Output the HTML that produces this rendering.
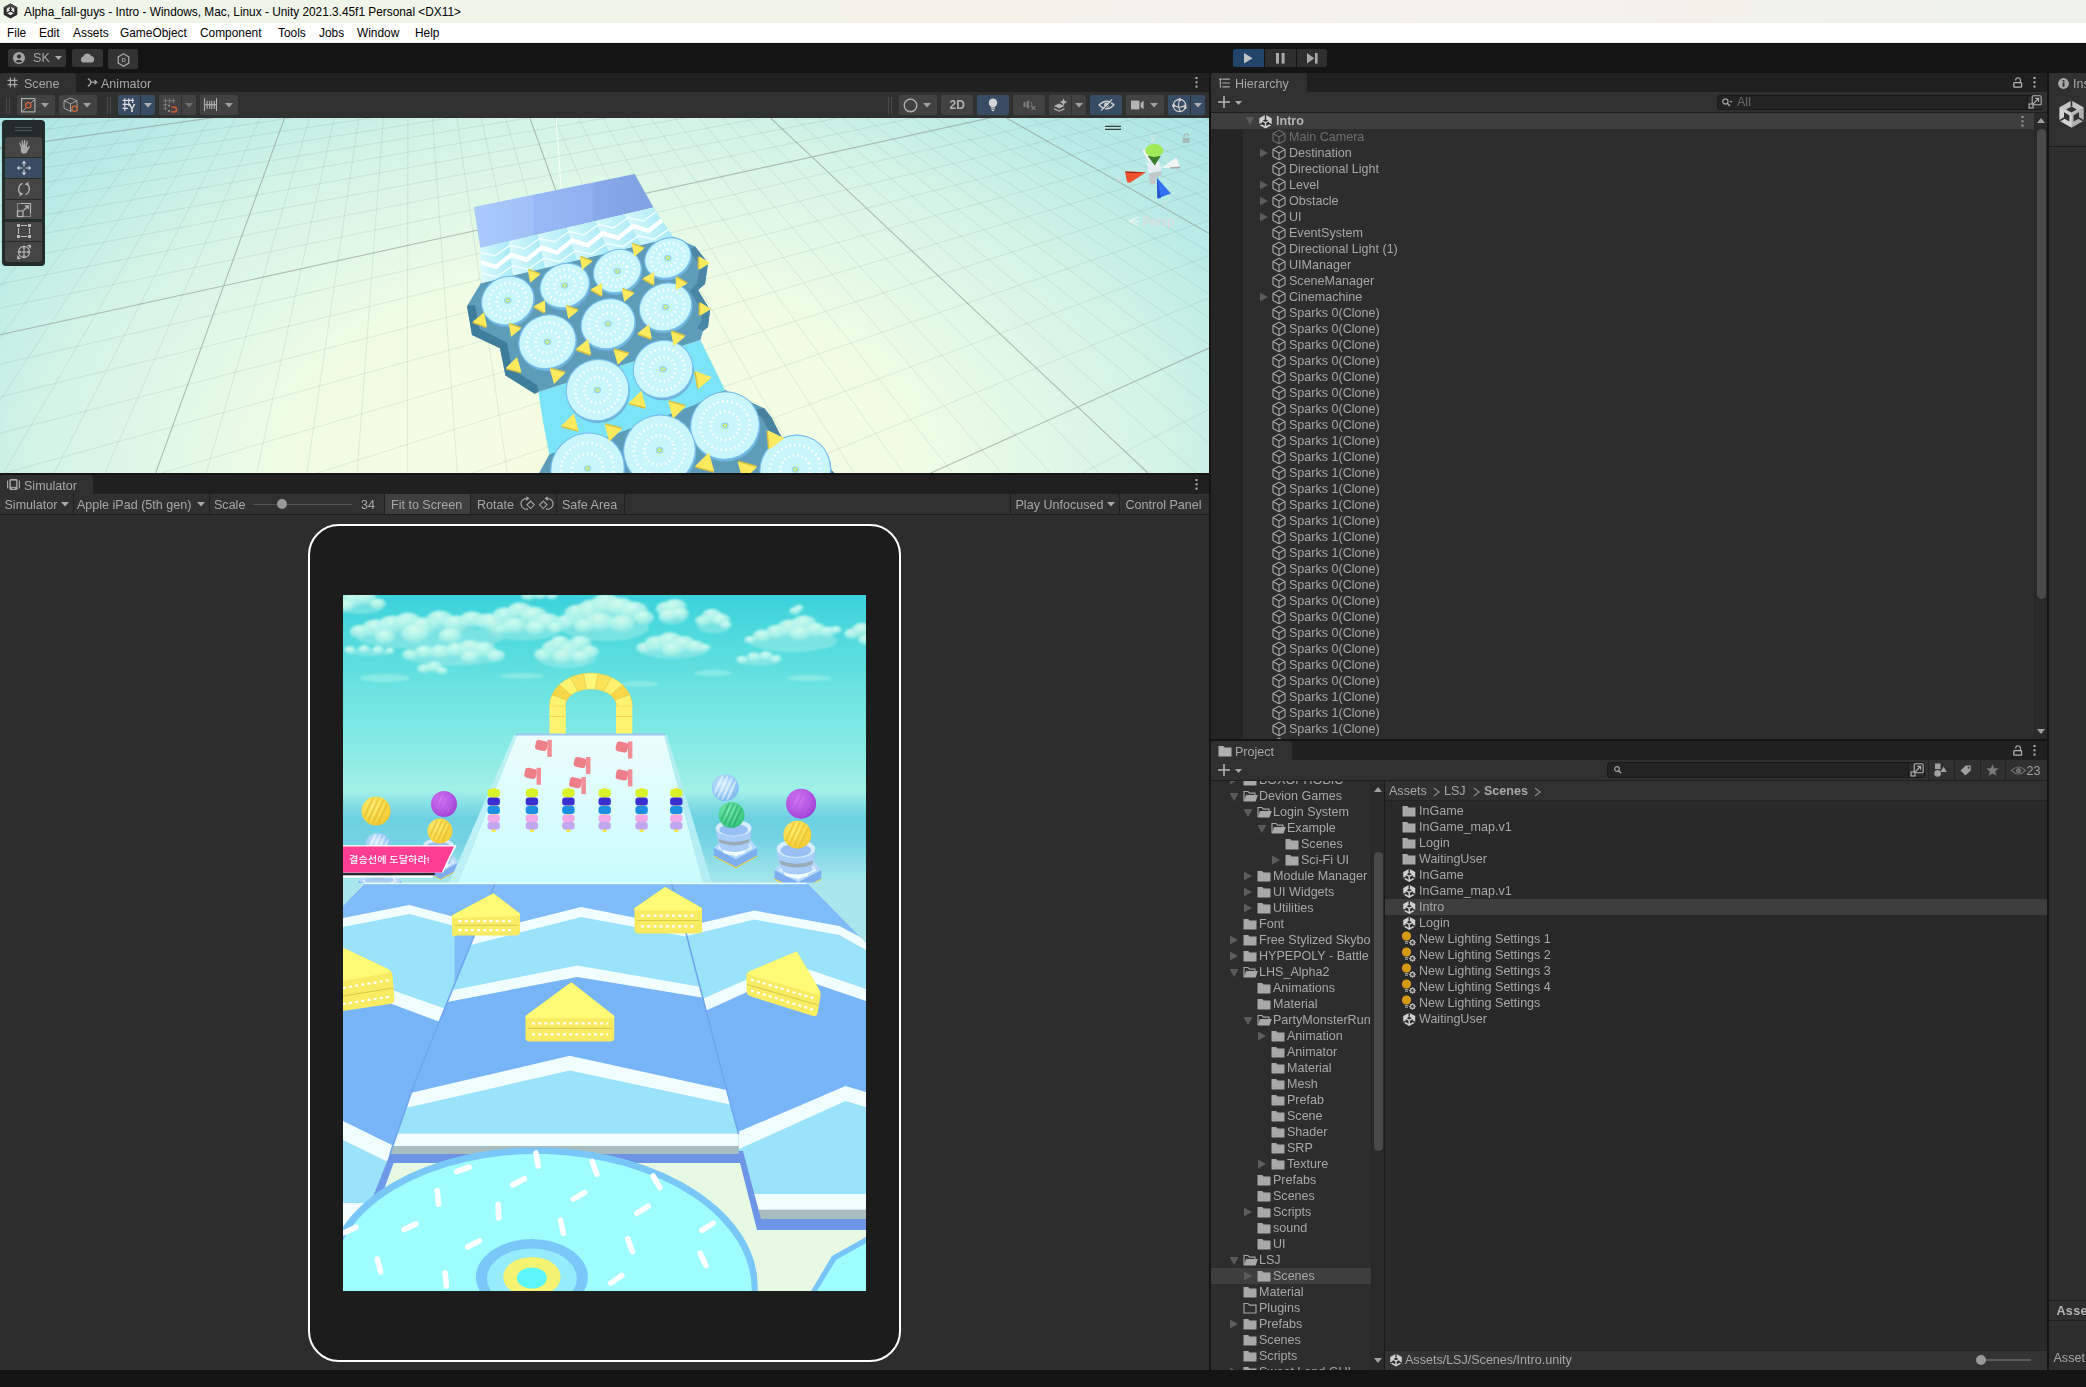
<!DOCTYPE html><html lang="en"><head><meta charset="utf-8"><title>Unity</title>
<style>
*{box-sizing:border-box;margin:0;padding:0}
html,body{width:2086px;height:1387px;overflow:hidden;background:#141414}
body{position:relative;font-family:"Liberation Sans","Noto Sans CJK KR",sans-serif;font-size:12.55px;color:#a8a8a8;line-height:16px;-webkit-font-smoothing:antialiased}
.a{position:absolute}
svg{position:absolute;overflow:visible}
.t{position:absolute;white-space:pre;height:16px;line-height:16px}
#title{left:0;top:0;width:2086px;height:23px;background:linear-gradient(90deg,#eef5e9 0%,#f1f4e9 30%,#f4f2e9 48%,#f6f1ed 62%,#f3f2ea 80%,#eef3ea 100%)}
#title .t{left:24px;top:4px;color:#000;font-size:11.85px}
#menu{left:0;top:23px;width:2086px;height:20px;background:#fff;border-bottom:1px solid #f0f0f0}
#menu .t{top:2px;color:#000;font-size:11.9px}
#tb{left:0;top:43px;width:2086px;height:30px;background:#141414;will-change:transform}
.btn{position:absolute;background:#2e2e2e;border-radius:2px}
.panel{position:absolute;background:#2d2d2d;will-change:transform}
.tabbar{position:absolute;left:0;top:0;right:0;height:19px;background:#202020}
.tab{position:absolute;top:0;height:19px;background:#303030;border-radius:3px 3px 0 0}
.tab.in{background:transparent}
.tab .t{top:2px;color:#a8a8a8}
.tbar{position:absolute;left:0;right:0;background:#303030}
.sb{position:absolute;top:3px;height:20px;background:#444;border-radius:2px}
.sb.on{background:#384d63}
.row{position:absolute;left:0;height:16px}
.dim{color:#6e6e6e}
</style>

</head><body>
<div id="title" class="a">
<svg style="left:2.5px;top:3px" width="15" height="16" viewBox="0 0 15 16" ><path d="M7.5 0.4 L14.3 4.2 V11.8 L7.5 15.6 L0.7 11.8 V4.2 Z" fill="#2a2a2a"/><path d="M7.5 0.4 L14.3 4.2 L7.5 8 L0.7 4.2 Z" fill="#4a4a4a"/><path d="M7.5 3.6 L11.3 5.7 V10 L7.5 12.2 L3.7 10 V5.7 Z" fill="#e8e8e8"/><path d="M7.5 3.6 V7.9 M11.3 10 L7.5 7.9 L3.7 10" stroke="#222" stroke-width="1.3" fill="none"/><path d="M7.5 5.4 L9.2 6.4 L7.5 7.4 L5.8 6.4 Z" fill="#222"/></svg>
<span class="t " style="left:24px;top:4px;">Alpha_fall-guys - Intro - Windows, Mac, Linux - Unity 2021.3.45f1 Personal &lt;DX11&gt;</span>
</div>
<div id="menu" class="a">
<span class="t " style="left:7px;top:2px;">File</span>
<span class="t " style="left:39px;top:2px;">Edit</span>
<span class="t " style="left:73px;top:2px;">Assets</span>
<span class="t " style="left:120px;top:2px;">GameObject</span>
<span class="t " style="left:200px;top:2px;">Component</span>
<span class="t " style="left:278px;top:2px;">Tools</span>
<span class="t " style="left:319px;top:2px;">Jobs</span>
<span class="t " style="left:357px;top:2px;">Window</span>
<span class="t " style="left:415px;top:2px;">Help</span>
</div>
<div id="tb" class="a">
<div class="btn" style="left:8px;top:6px;width:58px;height:18px;background:#333"></div>
<svg style="left:13px;top:9px" width="12" height="12" viewBox="0 0 12 12" ><circle cx="6" cy="6" r="6" fill="#a6a6a6"/><circle cx="6" cy="4.4" r="2.1" fill="#333"/><path d="M2.2 9.4 Q6 6.2 9.8 9.4 Q6 11.4 2.2 9.4 Z" fill="#333"/></svg>
<span class="t" style="left:33px;top:7px;color:#a8a8a8;font-size:12.6px">SK</span>
<svg style="left:55px;top:13px" width="7" height="4" viewBox="0 0 7 4" ><path d="M0 0 H7 L3.5 4 Z" fill="#a8a8a8"/></svg>
<div class="btn" style="left:72px;top:6px;width:31px;height:18px;background:#333"></div>
<svg style="left:79.5px;top:10px" width="15" height="10" viewBox="0 0 15 10" ><path d="M3.6 9.6 A3.1 3.1 0 0 1 3.3 3.5 A4.2 4.2 0 0 1 11.2 3.1 A3.3 3.3 0 0 1 11.6 9.6 Z" fill="#a6a6a6"/></svg>
<div class="btn" style="left:108px;top:6px;width:30px;height:19.5px;background:#333"></div>
<svg style="left:116.5px;top:9.5px" width="13" height="14" viewBox="0 0 13 14" ><path d="M6.5 0.8 L11.8 3.9 V10.1 L6.5 13.2 L1.2 10.1 V3.9 Z" fill="none" stroke="#a6a6a6" stroke-width="1.3"/><text x="4.4" y="9.3" font-family="Liberation Sans,sans-serif" font-size="6" font-weight="bold" fill="#a6a6a6">D</text></svg>
<div class="btn" style="left:1233px;top:6px;width:31px;height:18px;background:#21456a;border-radius:2px 0 0 2px"></div>
<div class="btn" style="left:1265px;top:6px;width:31px;height:18px;background:#2e2e2e;border-radius:0"></div>
<div class="btn" style="left:1297px;top:6px;width:30px;height:18px;background:#2e2e2e;border-radius:0 2px 2px 0"></div>
<svg style="left:1244px;top:9.7px" width="9" height="11" viewBox="0 0 9 11" ><path d="M0 0 L8.6 5.3 L0 10.6 Z" fill="#c2c2c2"/></svg>
<svg style="left:1275.6px;top:9.7px" width="9" height="11" viewBox="0 0 9 11" ><rect x="0" y="0" width="3" height="10.6" fill="#a8a8a8"/><rect x="5.6" y="0" width="3" height="10.6" fill="#a8a8a8"/></svg>
<svg style="left:1306.6px;top:9.7px" width="11" height="11" viewBox="0 0 11 11" ><path d="M0 0 L7.4 5.3 L0 10.6 Z" fill="#a8a8a8"/><rect x="8" y="0" width="2.6" height="10.6" fill="#a8a8a8"/></svg>
</div>
<div class="panel" style="left:0;top:73px;width:1209px;height:400px;background:#303030">
<div class="tabbar"></div>
<div class="tab" style="left:0;width:76px"></div>
<svg style="left:7px;top:4px" width="11" height="11" viewBox="0 0 11 11" ><path d="M3.4 0.5 V10.5 M7.6 0.5 V10.5 M0.5 3.4 H10.5 M0.5 7.6 H10.5" stroke="#a8a8a8" stroke-width="1.2"/></svg>
<span class="t" style="left:24px;top:2.5px;">Scene</span>
<svg style="left:86.5px;top:5px" width="11" height="9" viewBox="0 0 11 9" ><path d="M0.8 0.8 Q3 1 4 4.2 Q3.4 7.6 0.8 8.2 M4 4.2 H9.5 M7.4 2.2 L9.8 4.2 L7.4 6.2" fill="none" stroke="#a8a8a8" stroke-width="1.2"/></svg>
<span class="t" style="left:101px;top:2.5px;">Animator</span>
<svg style="left:1195px;top:4px" width="3" height="11" viewBox="0 0 3 11" ><rect x="0.5" y="0" width="2" height="2" fill="#b4b4b4"/><rect x="0.5" y="4.3" width="2" height="2" fill="#b4b4b4"/><rect x="0.5" y="8.6" width="2" height="2" fill="#b4b4b4"/></svg>
<div class="tbar" style="top:19px;height:26px"></div>
<div class="a" style="left:6px;top:23.5px;width:1px;height:17px;background:#4a4a4a"></div><div class="a" style="left:9px;top:23.5px;width:1px;height:17px;background:#4a4a4a"></div>
<div class="a" style="left:17px;top:22px;width:38px;height:20px;background:#424242;border-radius:2px"></div>
<div class="a" style="left:59px;top:22px;width:38px;height:20px;background:#424242;border-radius:2px"></div>
<div class="a" style="left:107px;top:23.5px;width:1px;height:17px;background:#4a4a4a"></div><div class="a" style="left:110px;top:23.5px;width:1px;height:17px;background:#4a4a4a"></div>
<div class="a" style="left:118px;top:22px;width:22px;height:20px;background:#384d63;border-radius:2px 0 0 2px"></div>
<div class="a" style="left:141px;top:22px;width:14px;height:20px;background:#384d63;border-radius:0 2px 2px 0"></div>
<div class="a" style="left:159px;top:22px;width:22px;height:20px;background:#424242;border-radius:2px 0 0 2px"></div>
<div class="a" style="left:182px;top:22px;width:14px;height:20px;background:#424242;border-radius:0 2px 2px 0"></div>
<div class="a" style="left:200px;top:22px;width:38px;height:20px;background:#424242;border-radius:2px"></div>
<svg style="left:21px;top:24.5px" width="15" height="15" viewBox="0 0 15 15" ><rect x="0.6" y="0.6" width="13.3" height="13.3" fill="none" stroke="#b4b4b4" stroke-width="1.1"/><path d="M2 13 L13 2" stroke="#b4b4b4" stroke-width="0.9"/><circle cx="7.3" cy="7.3" r="2.6" fill="#424242" stroke="#d3683a" stroke-width="1.3"/></svg>
<svg style="left:41px;top:30px" width="8" height="4.5" viewBox="0 0 8 4.5" ><path d="M0 0 H8 L4.0 4.5 Z" fill="#a0a0a0"/></svg>
<svg style="left:62.5px;top:24px" width="16" height="16" viewBox="0 0 16 16" ><path d="M7.5 1 L14 3.8 V11.2 L7.5 14.4 L1 11.2 V3.8 Z M1 3.8 L7.5 6.8 L14 3.8 M7.5 6.8 V14.4" fill="none" stroke="#b4b4b4" stroke-width="1" stroke-opacity=".85"/><circle cx="11.6" cy="11.8" r="2.6" fill="#424242" stroke="#d3683a" stroke-width="1.3"/></svg>
<svg style="left:83px;top:30px" width="8" height="4.5" viewBox="0 0 8 4.5" ><path d="M0 0 H8 L4.0 4.5 Z" fill="#a0a0a0"/></svg>
<svg style="left:122px;top:24px" width="15" height="15" viewBox="0 0 15 15" ><path d="M2.8 1.3 L2.8 13.9 M6.8 1.3 L6.8 9.0 M10.7 1.3 L10.7 6.0 M0.6 3.4 L11.8 3.4 M0.6 7.4 L8.0 7.4 M0.6 11.3 L6.0 11.3" stroke="#dcdcdc" stroke-width="1.15" fill="none"/><text x="6.6" y="14.6" font-family="Liberation Sans,sans-serif" font-size="10.5" font-weight="bold" fill="#e0e0e0">Y</text></svg>
<svg style="left:144px;top:30px" width="8" height="4.5" viewBox="0 0 8 4.5" ><path d="M0 0 H8 L4.0 4.5 Z" fill="#b0b0b0"/></svg>
<svg style="left:163px;top:24px" width="15" height="15" viewBox="0 0 15 15" ><path d="M2.4 1.3 L2.4 13.0 M6.4 1.3 L6.4 6.5 M10.3 1.3 L10.3 6.5 M0.3 3.8 L12.1 3.8 M0.3 7.7 L4.5 7.7 M0.3 11.7 L4.0 11.7" stroke="#7c7c7c" stroke-width="1" fill="none"/><rect x="5.2" y="7.7" width="1.8" height="1.8" fill="#9a9a9a"/><rect x="5.2" y="13" width="1.8" height="1.8" fill="#9a9a9a"/><path d="M8.4 10.1 H11.2 A2.35 2.35 0 0 1 11.2 14.8 H8.4" fill="none" stroke="#c05a30" stroke-width="1.7"/></svg>
<svg style="left:185px;top:30px" width="8" height="4.5" viewBox="0 0 8 4.5" ><path d="M0 0 H8 L4.0 4.5 Z" fill="#707070"/></svg>
<svg style="left:203px;top:24px" width="15" height="15" viewBox="0 0 15 15" ><path d="M1.6 1.3 L1.6 13.9 M13.5 1.3 L13.5 13.9 M1.6 7.7 L13.5 7.7 M4.1 3.8 L4.1 12.0 M6.7 3.8 L6.7 12.0 M8.8 3.8 L8.8 12.0 M11.3 3.8 L11.3 12.0" stroke="#b8b8b8" stroke-width="1.05" fill="none"/></svg>
<svg style="left:225px;top:30px" width="8" height="4.5" viewBox="0 0 8 4.5" ><path d="M0 0 H8 L4.0 4.5 Z" fill="#a0a0a0"/></svg>
<div class="a" style="left:888px;top:23.5px;width:1px;height:17px;background:#4a4a4a"></div><div class="a" style="left:891px;top:23.5px;width:1px;height:17px;background:#4a4a4a"></div>
<div class="a" style="left:899px;top:22px;width:38px;height:20px;background:#424242;border-radius:2px"></div>
<div class="a" style="left:941px;top:22px;width:32px;height:20px;background:#424242;border-radius:2px"></div>
<div class="a" style="left:977px;top:22px;width:32px;height:20px;background:#384d63;border-radius:2px"></div>
<div class="a" style="left:1013px;top:22px;width:32px;height:20px;background:#424242;border-radius:2px"></div>
<div class="a" style="left:1049px;top:22px;width:22px;height:20px;background:#424242;border-radius:2px 0 0 2px"></div>
<div class="a" style="left:1072px;top:22px;width:14px;height:20px;background:#424242;border-radius:0 2px 2px 0"></div>
<div class="a" style="left:1090px;top:22px;width:32px;height:20px;background:#384d63;border-radius:2px"></div>
<div class="a" style="left:1126px;top:22px;width:38px;height:20px;background:#424242;border-radius:2px"></div>
<div class="a" style="left:1168px;top:22px;width:22px;height:20px;background:#384d63;border-radius:2px 0 0 2px"></div>
<div class="a" style="left:1191px;top:22px;width:14px;height:20px;background:#384d63;border-radius:0 2px 2px 0"></div>
<svg style="left:903px;top:24.5px" width="15" height="15" viewBox="0 0 15 15" ><circle cx="7.5" cy="7.5" r="6.3" fill="none" stroke="#b4b4b4" stroke-width="1.3"/><path d="M2.6 10.6 A6.3 6.3 0 0 0 13.6 9 A6.2 5.2 0 0 1 2.6 10.6 Z" fill="#b4b4b4"/></svg>
<svg style="left:923px;top:30px" width="8" height="4.5" viewBox="0 0 8 4.5" ><path d="M0 0 H8 L4.0 4.5 Z" fill="#a0a0a0"/></svg>
<span class="t" style="left:949.5px;top:24px;font-weight:bold;font-size:12px;color:#b0b0b0">2D</span>
<svg style="left:987px;top:25px" width="12" height="14" viewBox="0 0 12 14" ><path d="M6 0.5 A4.3 4.3 0 0 1 8.2 8.4 V9.6 H3.8 V8.4 A4.3 4.3 0 0 1 6 0.5 Z" fill="#d4d4d4"/><rect x="4.1" y="10.2" width="3.8" height="1.2" fill="#d4d4d4"/><rect x="4.8" y="12" width="2.4" height="1.1" fill="#d4d4d4"/></svg>
<svg style="left:1023px;top:26px" width="14" height="12" viewBox="0 0 14 12" ><rect x="0.5" y="3" width="2" height="5" fill="#7e7e7e"/><path d="M3.5 3 L6 1 V10 L3.5 8 Z" fill="#7e7e7e"/><path d="M7.5 2.5 A4 4 0 0 1 7.5 8.5" fill="none" stroke="#7e7e7e" stroke-width="0.9"/><path d="M8.6 6.8 L12.4 10.8 M12.4 6.8 L8.6 10.8" stroke="#7e7e7e" stroke-width="1.1"/></svg>
<svg style="left:1053px;top:25px" width="15" height="14" viewBox="0 0 15 14" ><path d="M1 8 L6 5.6 L11.5 8 L6.3 10.6 Z" fill="#b4b4b4"/><path d="M1 10.6 L6.3 13.2 L11.5 10.6" fill="none" stroke="#b4b4b4" stroke-width="1.2"/><path d="M10.5 0.2 L11.6 3 L14.4 4.1 L11.6 5.2 L10.5 8 L9.4 5.2 L6.6 4.1 L9.4 3 Z" fill="#b4b4b4"/></svg>
<svg style="left:1075px;top:30px" width="8" height="4.5" viewBox="0 0 8 4.5" ><path d="M0 0 H8 L4.0 4.5 Z" fill="#a0a0a0"/></svg>
<svg style="left:1098px;top:26px" width="17" height="12" viewBox="0 0 17 12" ><path d="M1 6 Q8.5 -1.5 16 6 Q8.5 13.5 1 6 Z" fill="none" stroke="#d0d0d0" stroke-width="1.2"/><circle cx="8.5" cy="6" r="2.4" fill="#d0d0d0"/><path d="M3 11.6 L14 0.4" stroke="#d0d0d0" stroke-width="1.3"/><path d="M4 12.4 L15 1.2" stroke="#384d63" stroke-width="1"/></svg>
<svg style="left:1131px;top:27px" width="14" height="10" viewBox="0 0 14 10" ><rect x="0" y="0.6" width="8.4" height="8.8" fill="#b4b4b4"/><path d="M9.6 3 L12.6 0.8 V9.2 L9.6 7 Z" fill="#b4b4b4"/></svg>
<svg style="left:1149.5px;top:30px" width="8" height="4.5" viewBox="0 0 8 4.5" ><path d="M0 0 H8 L4.0 4.5 Z" fill="#a0a0a0"/></svg>
<svg style="left:1171.5px;top:24.5px" width="15" height="15" viewBox="0 0 15 15" ><circle cx="7.5" cy="7.5" r="6.2" fill="none" stroke="#d0d0d0" stroke-width="1.3"/><path d="M1.5 7 Q7.5 11.5 13.5 7 M7.8 1.5 Q5 7.5 8.4 13.5" fill="none" stroke="#d0d0d0" stroke-width="1.1"/><circle cx="7.8" cy="1.6" r="1.5" fill="#d0d0d0"/><circle cx="1.6" cy="7.4" r="1.5" fill="#d0d0d0"/><circle cx="13.2" cy="9.4" r="1.5" fill="#d0d0d0"/></svg>
<svg style="left:1194px;top:30px" width="8" height="4.5" viewBox="0 0 8 4.5" ><path d="M0 0 H8 L4.0 4.5 Z" fill="#b0b0b0"/></svg>
<div class="a" style="left:0;top:45px;width:1209px;height:355px;overflow:hidden"><div class="a" style="left:0;top:-1px;width:1209px;height:356px">
<div class="a" style="left:0;top:0;width:1209px;height:356px;background:radial-gradient(ellipse 900px 560px at 600px 353px,#f6fde0 0%,#f0fde4 34%,#e4f9e6 45%,#d4f4e6 62%,#bdece6 75%,#b1e8e6 86%,#abe6e6 90%,#a3e3e5 100%)"></div>
<svg style="left:0;top:0" width="1209" height="356" viewBox="0 117 1209 356">
<path d="M10.4 117.0 L0.0 125.8 M60.7 117.0 L0.0 176.3 M85.9 117.0 L0.0 207.4 M110.9 117.0 L0.0 243.6 M135.9 117.0 L0.0 286.4 M160.9 117.0 L0.0 337.7 M185.8 117.0 L0.0 400.5 M210.7 117.0 L3.4 473.0 M235.5 117.0 L54.2 473.0 M260.3 117.0 L104.9 473.0 M309.7 117.0 L206.1 473.0 M334.3 117.0 L256.6 473.0 M358.9 117.0 L306.9 473.0 M383.4 117.0 L357.1 473.0 M407.9 117.0 L407.3 473.0 M432.4 117.0 L457.3 473.0 M456.7 117.0 L507.3 473.0 M481.1 117.0 L557.1 473.0 M0.0 124.5 L56.4 117.0 M505.4 117.0 L606.9 473.0 M0.0 135.8 L137.3 117.0 M553.8 117.0 L706.1 473.0 M0.0 160.8 L297.4 117.0 M578.0 117.0 L755.6 473.0 M0.0 174.6 L376.8 117.0 M602.1 117.0 L804.9 473.0 M0.0 189.5 L455.6 117.0 M626.1 117.0 L854.2 473.0 M0.0 205.5 L534.0 117.0 M650.1 117.0 L903.4 473.0 M0.0 222.7 L611.8 117.0 M674.1 117.0 L952.5 473.0 M0.0 241.4 L689.2 117.0 M698.0 117.0 L1001.5 473.0 M0.0 261.7 L766.1 117.0 M721.9 117.0 L1050.4 473.0 M-0.0 283.9 L842.5 117.0 M745.7 117.0 L1099.1 473.0 M0.0 308.1 L918.4 117.0 M793.2 117.0 L1196.5 473.0 M0.0 364.2 L1068.9 117.0 M816.9 117.0 L1209.0 443.1 M0.0 396.9 L1143.4 117.0 M840.6 117.0 L1209.0 406.6 M0.0 433.4 L1209.0 119.2 M864.2 117.0 L1209.0 374.0 M5.1 473.0 L1209.0 139.8 M887.7 117.0 L1209.0 344.7 M161.8 473.0 L1209.0 163.0 M911.2 117.0 L1209.0 318.2 M317.4 473.0 L1209.0 189.5 M934.7 117.0 L1209.0 294.1 M472.2 473.0 L1209.0 220.1 M958.1 117.0 L1209.0 272.1 M626.0 473.0 L1209.0 255.7 M981.5 117.0 L1209.0 251.9 M778.9 473.0 L1209.0 297.8 M1028.1 117.0 L1209.0 216.2 M1081.9 473.0 L1209.0 409.5 M1051.3 117.0 L1209.0 200.3 M1074.5 117.0 L1209.0 185.6 M1097.7 117.0 L1209.0 171.9 M1120.8 117.0 L1209.0 159.1 M1143.9 117.0 L1209.0 147.1 M1166.9 117.0 L1209.0 135.9 M1189.9 117.0 L1209.0 125.3" stroke="#6c7c78" stroke-opacity="0.14" stroke-width="1" fill="none"/>
<path d="M35.6 117.0 L0.0 149.4 M285.0 117.0 L155.6 473.0 M529.6 117.0 L656.5 473.0 M0.0 147.9 L217.6 117.0 M769.5 117.0 L1147.9 473.0 M0.0 334.8 L993.9 117.0 M1004.8 117.0 L1209.0 233.3 M930.8 473.0 L1209.0 348.1" stroke="#808480" stroke-opacity="0.5" stroke-width="1.1" fill="none"/>
<path d="M556 117 L562 200" stroke="#fff" stroke-opacity="0.8" stroke-width="1"/>
<polygon points="725,390 764.2,408.3 771.5,417.4 778.8,432 787.9,448.4 831.6,470.3 836,475 538,475 549.5,454" fill="#5e9dba"/>
<polygon points="764.2,408.3 771.5,417.4 778.8,432 787.9,448.4 831.6,470.3 836,475 824,475 780,452 770,433 762,418 752,410" fill="#47839f"/>
<polygon points="538.3,392 700.4,340 725,390 693.2,405.6 596.6,441 549.2,453.9 542.9,421" fill="#7ce4f8"/>
<polygon points="481,283 673.6,237 695,246.5 708,263 705,284 698,290 710,310 708,327 703,331 700.4,340 538.3,392 534.7,393.8 505.5,375.5 500,348.2 472,335 467,306" fill="#5e9dba"/>
<polygon points="467,306 472,335 500,348.2 505.5,375.5 534.7,393.8 538.3,392 537,385 512,369 507,342.5 479.5,329 475,305" fill="#3f7d9c"/>
<polygon points="695,246.5 708,263 705,284 698,290 710,310 708,327 703,331 697,328 701,322 702,311 690,291 697,283 700,266 689,250" fill="#4a86a6"/>
<defs><linearGradient id="bl" x1="0" y1="0" x2="1" y2="0"><stop offset="0" stop-color="#aacbfb"/><stop offset="0.33" stop-color="#a0c0f8"/><stop offset="0.34" stop-color="#98b8f5"/><stop offset="0.66" stop-color="#90b0f0"/><stop offset="0.67" stop-color="#88a9ea"/><stop offset="1" stop-color="#7fa0e2"/></linearGradient></defs>
<polygon points="473.8,206.9 634.6,174 653.4,207.6 480.3,248" fill="url(#bl)"/>
<defs><linearGradient id="tg" x1="0" y1="0.6" x2="1" y2="0.4"><stop offset="0" stop-color="#dbf9fd"/><stop offset="1" stop-color="#a4eaf7"/></linearGradient></defs>
<polygon points="480.3,248.0 509.2,241.3 513.1,275.6 481.0,283.3" fill="url(#tg)"/>
<polygon points="509.2,241.3 538.0,234.5 545.2,267.9 513.1,275.6" fill="url(#tg)"/>
<polygon points="538.0,234.5 566.9,227.8 577.3,260.2 545.2,267.9" fill="url(#tg)"/>
<polygon points="566.9,227.8 595.7,221.1 609.4,252.6 577.3,260.2" fill="url(#tg)"/>
<polygon points="595.7,221.1 624.5,214.3 641.5,244.9 609.4,252.6" fill="url(#tg)"/>
<polygon points="624.5,214.3 653.4,207.6 673.6,237.2 641.5,244.9" fill="url(#tg)"/>
<clipPath id="bandc"><polygon points="480.3,248 653.4,207.6 673.6,237.2 481,283.3"/></clipPath>
<g clip-path="url(#bandc)">
<polyline points="480.7,262.2 495.9,266.9 511.2,254.9 526.5,259.7 541.7,247.7 557.0,252.5 572.3,240.5 587.6,245.3 602.8,233.2 618.1,238.0 633.4,226.0 648.6,230.8 663.9,218.8" fill="none" stroke="#fff" stroke-width="4.4"/>
<polyline points="480.5,252.4 495.2,255.7 510.0,245.4 524.8,248.8 539.6,238.5 554.4,241.8 569.1,231.5 583.9,234.9 598.7,224.6 613.5,227.9 628.3,217.7 643.1,221.0 657.8,210.7" fill="none" stroke="#f4feff" stroke-width="1.5" stroke-opacity=".95"/>
<polyline points="480.9,273.3 496.6,276.8 512.4,265.8 528.1,269.3 543.9,258.3 559.7,261.8 575.4,250.8 591.2,254.3 606.9,243.3 622.7,246.7 638.4,235.8 654.2,239.2 670.0,228.3" fill="none" stroke="#f4feff" stroke-width="1.5" stroke-opacity=".95"/>
</g>
<ellipse cx="507.7" cy="303.1" rx="26.7" ry="23.8" fill="#6fb4d8" transform="rotate(-25 507.7 300.6)"/>
<ellipse cx="507.7" cy="300.6" rx="26.7" ry="23.8" fill="#c9f5fc" stroke="#74bdee" stroke-width="1.1" transform="rotate(-25 507.7 300.6)"/>
<ellipse cx="507.7" cy="300.6" rx="19.224" ry="17.136" fill="none" stroke="#fff" stroke-opacity=".9" stroke-width="3" stroke-dasharray="1.5 3.2" transform="rotate(-25 507.7 300.6)"/>
<ellipse cx="507.7" cy="300.6" rx="11.213999999999999" ry="9.996" fill="none" stroke="#fff" stroke-opacity=".9" stroke-width="3" stroke-dasharray="1.5 3" transform="rotate(-25 507.7 300.6)"/>
<ellipse cx="507.7" cy="300.6" rx="3.6" ry="3.1" fill="#8fd4f2"/><ellipse cx="507.7" cy="300.6" rx="2.2" ry="1.9" fill="#e8ec60"/><ellipse cx="507.7" cy="300.6" rx="1" ry="0.9" fill="#7fe6f6"/>
<ellipse cx="564.7" cy="288.0" rx="25.2" ry="21.6" fill="#6fb4d8" transform="rotate(-25 564.7 285.5)"/>
<ellipse cx="564.7" cy="285.5" rx="25.2" ry="21.6" fill="#c9f5fc" stroke="#74bdee" stroke-width="1.1" transform="rotate(-25 564.7 285.5)"/>
<ellipse cx="564.7" cy="285.5" rx="18.144" ry="15.552" fill="none" stroke="#fff" stroke-opacity=".9" stroke-width="3" stroke-dasharray="1.5 3.2" transform="rotate(-25 564.7 285.5)"/>
<ellipse cx="564.7" cy="285.5" rx="10.584" ry="9.072000000000001" fill="none" stroke="#fff" stroke-opacity=".9" stroke-width="3" stroke-dasharray="1.5 3" transform="rotate(-25 564.7 285.5)"/>
<ellipse cx="564.7" cy="285.5" rx="3.6" ry="3.1" fill="#8fd4f2"/><ellipse cx="564.7" cy="285.5" rx="2.2" ry="1.9" fill="#e8ec60"/><ellipse cx="564.7" cy="285.5" rx="1" ry="0.9" fill="#7fe6f6"/>
<ellipse cx="617.3" cy="273.5" rx="24.5" ry="21" fill="#6fb4d8" transform="rotate(-25 617.3 271)"/>
<ellipse cx="617.3" cy="271" rx="24.5" ry="21" fill="#c9f5fc" stroke="#74bdee" stroke-width="1.1" transform="rotate(-25 617.3 271)"/>
<ellipse cx="617.3" cy="271" rx="17.64" ry="15.12" fill="none" stroke="#fff" stroke-opacity=".9" stroke-width="3" stroke-dasharray="1.5 3.2" transform="rotate(-25 617.3 271)"/>
<ellipse cx="617.3" cy="271" rx="10.29" ry="8.82" fill="none" stroke="#fff" stroke-opacity=".9" stroke-width="3" stroke-dasharray="1.5 3" transform="rotate(-25 617.3 271)"/>
<ellipse cx="617.3" cy="271" rx="3.6" ry="3.1" fill="#8fd4f2"/><ellipse cx="617.3" cy="271" rx="2.2" ry="1.9" fill="#e8ec60"/><ellipse cx="617.3" cy="271" rx="1" ry="0.9" fill="#7fe6f6"/>
<ellipse cx="667.8" cy="260.5" rx="23.8" ry="19.5" fill="#6fb4d8" transform="rotate(-25 667.8 258)"/>
<ellipse cx="667.8" cy="258" rx="23.8" ry="19.5" fill="#c9f5fc" stroke="#74bdee" stroke-width="1.1" transform="rotate(-25 667.8 258)"/>
<ellipse cx="667.8" cy="258" rx="17.136" ry="14.04" fill="none" stroke="#fff" stroke-opacity=".9" stroke-width="3" stroke-dasharray="1.5 3.2" transform="rotate(-25 667.8 258)"/>
<ellipse cx="667.8" cy="258" rx="9.996" ry="8.19" fill="none" stroke="#fff" stroke-opacity=".9" stroke-width="3" stroke-dasharray="1.5 3" transform="rotate(-25 667.8 258)"/>
<ellipse cx="667.8" cy="258" rx="3.6" ry="3.1" fill="#8fd4f2"/><ellipse cx="667.8" cy="258" rx="2.2" ry="1.9" fill="#e8ec60"/><ellipse cx="667.8" cy="258" rx="1" ry="0.9" fill="#7fe6f6"/>
<ellipse cx="547.4" cy="344.3" rx="29" ry="26.5" fill="#6fb4d8" transform="rotate(-25 547.4 341.8)"/>
<ellipse cx="547.4" cy="341.8" rx="29" ry="26.5" fill="#c9f5fc" stroke="#74bdee" stroke-width="1.1" transform="rotate(-25 547.4 341.8)"/>
<ellipse cx="547.4" cy="341.8" rx="20.88" ry="19.08" fill="none" stroke="#fff" stroke-opacity=".9" stroke-width="3" stroke-dasharray="1.5 3.2" transform="rotate(-25 547.4 341.8)"/>
<ellipse cx="547.4" cy="341.8" rx="12.18" ry="11.129999999999999" fill="none" stroke="#fff" stroke-opacity=".9" stroke-width="3" stroke-dasharray="1.5 3" transform="rotate(-25 547.4 341.8)"/>
<ellipse cx="547.4" cy="341.8" rx="3.6" ry="3.1" fill="#8fd4f2"/><ellipse cx="547.4" cy="341.8" rx="2.2" ry="1.9" fill="#e8ec60"/><ellipse cx="547.4" cy="341.8" rx="1" ry="0.9" fill="#7fe6f6"/>
<ellipse cx="608" cy="326.2" rx="27.4" ry="24.5" fill="#6fb4d8" transform="rotate(-25 608 323.7)"/>
<ellipse cx="608" cy="323.7" rx="27.4" ry="24.5" fill="#c9f5fc" stroke="#74bdee" stroke-width="1.1" transform="rotate(-25 608 323.7)"/>
<ellipse cx="608" cy="323.7" rx="19.727999999999998" ry="17.64" fill="none" stroke="#fff" stroke-opacity=".9" stroke-width="3" stroke-dasharray="1.5 3.2" transform="rotate(-25 608 323.7)"/>
<ellipse cx="608" cy="323.7" rx="11.508" ry="10.29" fill="none" stroke="#fff" stroke-opacity=".9" stroke-width="3" stroke-dasharray="1.5 3" transform="rotate(-25 608 323.7)"/>
<ellipse cx="608" cy="323.7" rx="3.6" ry="3.1" fill="#8fd4f2"/><ellipse cx="608" cy="323.7" rx="2.2" ry="1.9" fill="#e8ec60"/><ellipse cx="608" cy="323.7" rx="1" ry="0.9" fill="#7fe6f6"/>
<ellipse cx="665.6" cy="309.5" rx="26.7" ry="23.5" fill="#6fb4d8" transform="rotate(-25 665.6 307)"/>
<ellipse cx="665.6" cy="307" rx="26.7" ry="23.5" fill="#c9f5fc" stroke="#74bdee" stroke-width="1.1" transform="rotate(-25 665.6 307)"/>
<ellipse cx="665.6" cy="307" rx="19.224" ry="16.919999999999998" fill="none" stroke="#fff" stroke-opacity=".9" stroke-width="3" stroke-dasharray="1.5 3.2" transform="rotate(-25 665.6 307)"/>
<ellipse cx="665.6" cy="307" rx="11.213999999999999" ry="9.87" fill="none" stroke="#fff" stroke-opacity=".9" stroke-width="3" stroke-dasharray="1.5 3" transform="rotate(-25 665.6 307)"/>
<ellipse cx="665.6" cy="307" rx="3.6" ry="3.1" fill="#8fd4f2"/><ellipse cx="665.6" cy="307" rx="2.2" ry="1.9" fill="#e8ec60"/><ellipse cx="665.6" cy="307" rx="1" ry="0.9" fill="#7fe6f6"/>
<ellipse cx="663.1" cy="371.7" rx="30" ry="28.6" fill="#6fb4d8" transform="rotate(-25 663.1 369.2)"/>
<ellipse cx="663.1" cy="369.2" rx="30" ry="28.6" fill="#c9f5fc" stroke="#74bdee" stroke-width="1.1" transform="rotate(-25 663.1 369.2)"/>
<ellipse cx="663.1" cy="369.2" rx="21.599999999999998" ry="20.592" fill="none" stroke="#fff" stroke-opacity=".9" stroke-width="3" stroke-dasharray="1.5 3.2" transform="rotate(-25 663.1 369.2)"/>
<ellipse cx="663.1" cy="369.2" rx="12.6" ry="12.012" fill="none" stroke="#fff" stroke-opacity=".9" stroke-width="3" stroke-dasharray="1.5 3" transform="rotate(-25 663.1 369.2)"/>
<ellipse cx="663.1" cy="369.2" rx="3.6" ry="3.1" fill="#8fd4f2"/><ellipse cx="663.1" cy="369.2" rx="2.2" ry="1.9" fill="#e8ec60"/><ellipse cx="663.1" cy="369.2" rx="1" ry="0.9" fill="#7fe6f6"/>
<ellipse cx="597.5" cy="392.6" rx="31.5" ry="30.5" fill="#6fb4d8" transform="rotate(-25 597.5 390.1)"/>
<ellipse cx="597.5" cy="390.1" rx="31.5" ry="30.5" fill="#c9f5fc" stroke="#74bdee" stroke-width="1.1" transform="rotate(-25 597.5 390.1)"/>
<ellipse cx="597.5" cy="390.1" rx="22.68" ry="21.96" fill="none" stroke="#fff" stroke-opacity=".9" stroke-width="3" stroke-dasharray="1.5 3.2" transform="rotate(-25 597.5 390.1)"/>
<ellipse cx="597.5" cy="390.1" rx="13.229999999999999" ry="12.809999999999999" fill="none" stroke="#fff" stroke-opacity=".9" stroke-width="3" stroke-dasharray="1.5 3" transform="rotate(-25 597.5 390.1)"/>
<ellipse cx="597.5" cy="390.1" rx="3.6" ry="3.1" fill="#8fd4f2"/><ellipse cx="597.5" cy="390.1" rx="2.2" ry="1.9" fill="#e8ec60"/><ellipse cx="597.5" cy="390.1" rx="1" ry="0.9" fill="#7fe6f6"/>
<ellipse cx="725" cy="428.1" rx="34.5" ry="33.5" fill="#6fb4d8" transform="rotate(-25 725 425.6)"/>
<ellipse cx="725" cy="425.6" rx="34.5" ry="33.5" fill="#c9f5fc" stroke="#74bdee" stroke-width="1.1" transform="rotate(-25 725 425.6)"/>
<ellipse cx="725" cy="425.6" rx="24.84" ry="24.119999999999997" fill="none" stroke="#fff" stroke-opacity=".9" stroke-width="3" stroke-dasharray="1.5 3.2" transform="rotate(-25 725 425.6)"/>
<ellipse cx="725" cy="425.6" rx="14.49" ry="14.07" fill="none" stroke="#fff" stroke-opacity=".9" stroke-width="3" stroke-dasharray="1.5 3" transform="rotate(-25 725 425.6)"/>
<ellipse cx="725" cy="425.6" rx="3.6" ry="3.1" fill="#8fd4f2"/><ellipse cx="725" cy="425.6" rx="2.2" ry="1.9" fill="#e8ec60"/><ellipse cx="725" cy="425.6" rx="1" ry="0.9" fill="#7fe6f6"/>
<ellipse cx="659.5" cy="452.7" rx="36" ry="35" fill="#6fb4d8" transform="rotate(-25 659.5 450.2)"/>
<ellipse cx="659.5" cy="450.2" rx="36" ry="35" fill="#c9f5fc" stroke="#74bdee" stroke-width="1.1" transform="rotate(-25 659.5 450.2)"/>
<ellipse cx="659.5" cy="450.2" rx="25.919999999999998" ry="25.2" fill="none" stroke="#fff" stroke-opacity=".9" stroke-width="3" stroke-dasharray="1.5 3.2" transform="rotate(-25 659.5 450.2)"/>
<ellipse cx="659.5" cy="450.2" rx="15.12" ry="14.7" fill="none" stroke="#fff" stroke-opacity=".9" stroke-width="3" stroke-dasharray="1.5 3" transform="rotate(-25 659.5 450.2)"/>
<ellipse cx="659.5" cy="450.2" rx="3.6" ry="3.1" fill="#8fd4f2"/><ellipse cx="659.5" cy="450.2" rx="2.2" ry="1.9" fill="#e8ec60"/><ellipse cx="659.5" cy="450.2" rx="1" ry="0.9" fill="#7fe6f6"/>
<ellipse cx="587.5" cy="471.0" rx="37" ry="35" fill="#6fb4d8" transform="rotate(-25 587.5 468.5)"/>
<ellipse cx="587.5" cy="468.5" rx="37" ry="35" fill="#c9f5fc" stroke="#74bdee" stroke-width="1.1" transform="rotate(-25 587.5 468.5)"/>
<ellipse cx="587.5" cy="468.5" rx="26.64" ry="25.2" fill="none" stroke="#fff" stroke-opacity=".9" stroke-width="3" stroke-dasharray="1.5 3.2" transform="rotate(-25 587.5 468.5)"/>
<ellipse cx="587.5" cy="468.5" rx="15.54" ry="14.7" fill="none" stroke="#fff" stroke-opacity=".9" stroke-width="3" stroke-dasharray="1.5 3" transform="rotate(-25 587.5 468.5)"/>
<ellipse cx="587.5" cy="468.5" rx="3.6" ry="3.1" fill="#8fd4f2"/><ellipse cx="587.5" cy="468.5" rx="2.2" ry="1.9" fill="#e8ec60"/><ellipse cx="587.5" cy="468.5" rx="1" ry="0.9" fill="#7fe6f6"/>
<ellipse cx="795.2" cy="472.0" rx="35.5" ry="34" fill="#6fb4d8" transform="rotate(-25 795.2 469.5)"/>
<ellipse cx="795.2" cy="469.5" rx="35.5" ry="34" fill="#c9f5fc" stroke="#74bdee" stroke-width="1.1" transform="rotate(-25 795.2 469.5)"/>
<ellipse cx="795.2" cy="469.5" rx="25.56" ry="24.48" fill="none" stroke="#fff" stroke-opacity=".9" stroke-width="3" stroke-dasharray="1.5 3.2" transform="rotate(-25 795.2 469.5)"/>
<ellipse cx="795.2" cy="469.5" rx="14.91" ry="14.28" fill="none" stroke="#fff" stroke-opacity=".9" stroke-width="3" stroke-dasharray="1.5 3" transform="rotate(-25 795.2 469.5)"/>
<ellipse cx="795.2" cy="469.5" rx="3.6" ry="3.1" fill="#8fd4f2"/><ellipse cx="795.2" cy="469.5" rx="2.2" ry="1.9" fill="#e8ec60"/><ellipse cx="795.2" cy="469.5" rx="1" ry="0.9" fill="#7fe6f6"/>
<g transform="translate(533 275) rotate(200)"><polygon points="0,-7 6.6499999999999995,4.34 -6.6499999999999995,4.34" fill="#d8c040"/><polygon points="0,-8.2 6.6499999999999995,2.84 -6.6499999999999995,2.84" fill="#fbe95e"/></g>
<g transform="translate(585 262) rotate(200)"><polygon points="0,-7 6.6499999999999995,4.34 -6.6499999999999995,4.34" fill="#d8c040"/><polygon points="0,-8.2 6.6499999999999995,2.84 -6.6499999999999995,2.84" fill="#fbe95e"/></g>
<g transform="translate(637 249) rotate(200)"><polygon points="0,-7 6.6499999999999995,4.34 -6.6499999999999995,4.34" fill="#d8c040"/><polygon points="0,-8.2 6.6499999999999995,2.84 -6.6499999999999995,2.84" fill="#fbe95e"/></g>
<g transform="translate(702 263) rotate(90)"><polygon points="0,-7 6.6499999999999995,4.34 -6.6499999999999995,4.34" fill="#d8c040"/><polygon points="0,-8.2 6.6499999999999995,2.84 -6.6499999999999995,2.84" fill="#fbe95e"/></g>
<g transform="translate(650 279) rotate(30)"><polygon points="0,-7 6.6499999999999995,4.34 -6.6499999999999995,4.34" fill="#d8c040"/><polygon points="0,-8.2 6.6499999999999995,2.84 -6.6499999999999995,2.84" fill="#fbe95e"/></g>
<g transform="translate(680 283) rotate(210)"><polygon points="0,-7 6.6499999999999995,4.34 -6.6499999999999995,4.34" fill="#d8c040"/><polygon points="0,-8.2 6.6499999999999995,2.84 -6.6499999999999995,2.84" fill="#fbe95e"/></g>
<g transform="translate(598 290) rotate(30)"><polygon points="0,-7 6.6499999999999995,4.34 -6.6499999999999995,4.34" fill="#d8c040"/><polygon points="0,-8.2 6.6499999999999995,2.84 -6.6499999999999995,2.84" fill="#fbe95e"/></g>
<g transform="translate(627 294) rotate(200)"><polygon points="0,-7 6.6499999999999995,4.34 -6.6499999999999995,4.34" fill="#d8c040"/><polygon points="0,-8.2 6.6499999999999995,2.84 -6.6499999999999995,2.84" fill="#fbe95e"/></g>
<g transform="translate(541 307) rotate(30)"><polygon points="0,-7 6.6499999999999995,4.34 -6.6499999999999995,4.34" fill="#d8c040"/><polygon points="0,-8.2 6.6499999999999995,2.84 -6.6499999999999995,2.84" fill="#fbe95e"/></g>
<g transform="translate(571 311) rotate(200)"><polygon points="0,-7 6.6499999999999995,4.34 -6.6499999999999995,4.34" fill="#d8c040"/><polygon points="0,-8.2 6.6499999999999995,2.84 -6.6499999999999995,2.84" fill="#fbe95e"/></g>
<g transform="translate(481 321) rotate(20)"><polygon points="0,-8 7.6,4.96 -7.6,4.96" fill="#d8c040"/><polygon points="0,-9.2 7.6,3.46 -7.6,3.46" fill="#fbe95e"/></g>
<g transform="translate(514 329) rotate(200)"><polygon points="0,-7 6.6499999999999995,4.34 -6.6499999999999995,4.34" fill="#d8c040"/><polygon points="0,-8.2 6.6499999999999995,2.84 -6.6499999999999995,2.84" fill="#fbe95e"/></g>
<g transform="translate(703 309) rotate(90)"><polygon points="0,-7 6.6499999999999995,4.34 -6.6499999999999995,4.34" fill="#d8c040"/><polygon points="0,-8.2 6.6499999999999995,2.84 -6.6499999999999995,2.84" fill="#fbe95e"/></g>
<g transform="translate(514.6 366.4) rotate(15)"><polygon points="0,-8.5 8.075,5.27 -8.075,5.27" fill="#d8c040"/><polygon points="0,-9.7 8.075,3.7699999999999996 -8.075,3.7699999999999996" fill="#fbe95e"/></g>
<g transform="translate(556.5 374.6) rotate(195)"><polygon points="0,-8.5 8.075,5.27 -8.075,5.27" fill="#d8c040"/><polygon points="0,-9.7 8.075,3.7699999999999996 -8.075,3.7699999999999996" fill="#fbe95e"/></g>
<g transform="translate(584.8 348.2) rotate(20)"><polygon points="0,-8.5 8.075,5.27 -8.075,5.27" fill="#d8c040"/><polygon points="0,-9.7 8.075,3.7699999999999996 -8.075,3.7699999999999996" fill="#fbe95e"/></g>
<g transform="translate(620.3 355.5) rotate(195)"><polygon points="0,-8.5 8.075,5.27 -8.075,5.27" fill="#d8c040"/><polygon points="0,-9.7 8.075,3.7699999999999996 -8.075,3.7699999999999996" fill="#fbe95e"/></g>
<g transform="translate(645.8 332.7) rotate(20)"><polygon points="0,-8 7.6,4.96 -7.6,4.96" fill="#d8c040"/><polygon points="0,-9.2 7.6,3.46 -7.6,3.46" fill="#fbe95e"/></g>
<g transform="translate(676.8 337.3) rotate(200)"><polygon points="0,-8 7.6,4.96 -7.6,4.96" fill="#d8c040"/><polygon points="0,-9.2 7.6,3.46 -7.6,3.46" fill="#fbe95e"/></g>
<g transform="translate(638.5 401) rotate(15)"><polygon points="0,-9.5 9.025,5.89 -9.025,5.89" fill="#d8c040"/><polygon points="0,-10.7 9.025,4.39 -9.025,4.39" fill="#fbe95e"/></g>
<g transform="translate(701.4 379.2) rotate(80)"><polygon points="0,-9.5 9.025,5.89 -9.025,5.89" fill="#d8c040"/><polygon points="0,-10.7 9.025,4.39 -9.025,4.39" fill="#fbe95e"/></g>
<g transform="translate(675.8 408.3) rotate(195)"><polygon points="0,-9.5 9.025,5.89 -9.025,5.89" fill="#d8c040"/><polygon points="0,-10.7 9.025,4.39 -9.025,4.39" fill="#fbe95e"/></g>
<g transform="translate(571.1 423.8) rotate(15)"><polygon points="0,-9.5 9.025,5.89 -9.025,5.89" fill="#d8c040"/><polygon points="0,-10.7 9.025,4.39 -9.025,4.39" fill="#fbe95e"/></g>
<g transform="translate(612.1 431.1) rotate(195)"><polygon points="0,-9.5 9.025,5.89 -9.025,5.89" fill="#d8c040"/><polygon points="0,-10.7 9.025,4.39 -9.025,4.39" fill="#fbe95e"/></g>
<g transform="translate(773.3 439.3) rotate(85)"><polygon points="0,-10 9.5,6.2 -9.5,6.2" fill="#d8c040"/><polygon points="0,-11.2 9.5,4.7 -9.5,4.7" fill="#fbe95e"/></g>
<g transform="translate(705.9 463.9) rotate(15)"><polygon points="0,-10.5 9.975,6.51 -9.975,6.51" fill="#d8c040"/><polygon points="0,-11.7 9.975,5.01 -9.975,5.01" fill="#fbe95e"/></g>
<g transform="translate(746 469.4) rotate(195)"><polygon points="0,-10.5 9.975,6.51 -9.975,6.51" fill="#d8c040"/><polygon points="0,-11.7 9.975,5.01 -9.975,5.01" fill="#fbe95e"/></g>
<g>
<polygon points="1142.2,150.5 1145.2,149.6 1152.1,161.3 1148.7,162.2" fill="#f2f2f2"/>
<polygon points="1149.1,173.4 1161.6,171.6 1161.6,175.1 1155.6,177.7 1155.6,183.8 1150.4,184.2 1149.1,178.6" fill="#c4c8ca"/>
<polygon points="1146.9,163 1159,161.3 1162,169.9 1148.7,173.4" fill="#e7ebf2"/>
<polygon points="1147.8,156 1160.8,156 1154.7,165.4" fill="#3c7c2c"/>
<ellipse cx="1154.3" cy="150.5" rx="9.1" ry="6.5" fill="#9eea58"/>
<polygon points="1125.1,171.5 1146,172.3 1129.6,183.1 1127,182" fill="#f0512f"/><polygon points="1125.1,171.5 1134,171.8 1146,172.3 1133,173.2 1125.4,172.6" fill="#a82a1a"/>
<polygon points="1156.9,177.7 1171,193.5 1157.5,198.5" fill="#3272f2"/><polygon points="1156.9,177.7 1161,198 1157.5,198.5" fill="#2452c8"/>
<polygon points="1161.6,167.8 1176.4,157.4 1180.2,168.2" fill="#f3f4f5"/><polygon points="1170,167.2 1180.2,166.6 1180.2,168.4 1170,168.4" fill="#a4a8aa"/>
<text x="1150.5" y="140.5" font-family="Liberation Sans,sans-serif" font-size="10" fill="#e2e6e6">y</text>
<text x="1116" y="182" font-family="Liberation Sans,sans-serif" font-size="9.5" fill="#d8dede">x</text>
<text x="1162.5" y="206.3" font-family="Liberation Sans,sans-serif" font-size="9.5" fill="#d8dede">z</text>
<text x="1142.6" y="225.5" font-family="Liberation Sans,sans-serif" font-size="12" fill="#ead4dc" fill-opacity=".9" textLength="31.2" lengthAdjust="spacingAndGlyphs">Persp</text>
<path d="M1138.5 217 L1129.5 221.2 L1138.5 225.4 M1129.5 221.2 H1139" stroke="#f2f8f4" stroke-opacity=".9" fill="none" stroke-width="1.1"/>
<path d="M1105 126.4 H1121 M1105 129.4 H1121" stroke="#3c3c3c" stroke-width="1.1"/>
<rect x="1182.6" y="138" width="7" height="5" fill="#a9b9b9"/><path d="M1184 138 V136.4 A2.3 2.3 0 0 1 1188.6 136" fill="none" stroke="#a9b9b9" stroke-width="1.1"/>
</g>
</svg>
<div class="a" style="left:2px;top:3px;width:43px;height:145.5px;background:#232b2b;border-radius:4px"></div>
<div class="a" style="left:15px;top:10px;width:17px;height:1px;background:#4c5555"></div><div class="a" style="left:15px;top:13px;width:17px;height:1px;background:#4c5555"></div>
<div class="a" style="left:5.2px;top:20.3px;width:36.9px;height:19.4px;background:#454545;border-radius:3px 3px 0 0"></div>
<div class="a" style="left:5.2px;top:41.4px;width:36.9px;height:19.4px;background:#384d63;border-radius:0"></div>
<div class="a" style="left:5.2px;top:62.3px;width:36.9px;height:19.4px;background:#454545;border-radius:0"></div>
<div class="a" style="left:5.2px;top:83.0px;width:36.9px;height:19.4px;background:#454545;border-radius:0"></div>
<div class="a" style="left:5.2px;top:104.5px;width:36.9px;height:19.4px;background:#454545;border-radius:0"></div>
<div class="a" style="left:5.2px;top:125.3px;width:36.9px;height:19.4px;background:#454545;border-radius:0 0 3px 3px"></div>
<svg style="left:15.5px;top:22.1px" width="16" height="16" viewBox="0 0 16 16"><path d="M4.9 8.6 L3.2 4.2 Q3.4 3.2 4.3 3.6 L5.9 7.2 L5.6 1.9 Q6.2 0.9 6.9 1.8 L7.5 6.8 L8.1 1.2 Q8.8 0.3 9.4 1.3 L9.3 6.9 L10.7 2.4 Q11.5 1.7 11.9 2.7 L10.9 8 L11.2 9.1 L13 7 Q14.1 6.6 14 7.8 L11.6 12.2 Q10.8 14.6 8.4 14.6 H7.4 Q5.6 14.6 4.9 12.4 Z" fill="#a9a9a9"/></svg>
<svg style="left:15.5px;top:43.2px" width="16" height="16" viewBox="0 0 16 16"><path d="M8 2 V14 M2 8 H14" stroke="#c8ccd0" stroke-width="1.1"/><path d="M8 0.6 L10.3 3.4 H5.7 Z M8 15.4 L10.3 12.6 H5.7 Z M0.6 8 L3.4 5.7 V10.3 Z M15.4 8 L12.6 5.7 V10.3 Z" fill="#c8ccd0"/><rect x="6.6" y="6.6" width="2.8" height="2.8" fill="#384d63"/></svg>
<svg style="left:15.5px;top:64.1px" width="16" height="16" viewBox="0 0 16 16"><path d="M11.5 3.2 A5.8 6.2 0 0 1 9.5 13.6 M4.5 12.8 A5.8 6.2 0 0 1 6.5 2.4" fill="none" stroke="#b8b8b8" stroke-width="1.2"/><path d="M12.6 0.8 L11.9 4.4 L8.6 3.2 Z M3.4 15.2 L4.1 11.6 L7.4 12.8 Z" fill="#b8b8b8"/></svg>
<svg style="left:15.5px;top:84.8px" width="16" height="16" viewBox="0 0 16 16"><path d="M5 1.5 H14.5 V11" fill="none" stroke="#b8b8b8" stroke-width="1.2"/><path d="M14.5 11 V14.5 H1.5 V1.5 H5" fill="none" stroke="#b8b8b8" stroke-width="1.2" stroke-opacity=".55"/><rect x="1.5" y="9" width="5.5" height="5.5" fill="none" stroke="#b8b8b8" stroke-width="1.2"/><path d="M7.5 8.5 L12 4 M8.8 3.8 H12.2 V7.2" fill="none" stroke="#b8b8b8" stroke-width="1.2"/></svg>
<svg style="left:15.5px;top:106.3px" width="16" height="16" viewBox="0 0 16 16"><path d="M3 2.5 H13 M13.5 3 V13 M13 13.5 H3 M2.5 13 V3" stroke="#b8b8b8" stroke-width="1.1" stroke-dasharray="6.2 3.8" stroke-dashoffset="-1.9" fill="none"/><rect x="1" y="1" width="3" height="3" fill="#b8b8b8"/><rect x="12" y="1" width="3" height="3" fill="#b8b8b8"/><rect x="1" y="12" width="3" height="3" fill="#b8b8b8"/><rect x="12" y="12" width="3" height="3" fill="#b8b8b8"/></svg>
<svg style="left:15.5px;top:127.1px" width="16" height="16" viewBox="0 0 16 16"><circle cx="8" cy="8" r="5.6" fill="none" stroke="#b8b8b8" stroke-width="1.1"/><path d="M8 3.5 V12.5 M3.5 8 H12.5" stroke="#b8b8b8" stroke-width="1.1"/><path d="M8 2.2 L9.6 4.4 H6.4 Z M8 13.8 L9.6 11.6 H6.4 Z M2.2 8 L4.4 6.4 V9.6 Z M13.8 8 L11.6 6.4 V9.6 Z" fill="#b8b8b8"/><path d="M11 1 L15 0.8 L14.8 5 Z M5 15 L1 15.2 L1.2 11 Z" fill="#b8b8b8"/></svg>
</div></div>
</div>
<div class="panel" style="left:0;top:475px;width:1209px;height:895px">
<div class="tabbar"></div>
<div class="tab" style="left:0;width:93px"></div>
<svg style="left:6.5px;top:4px" width="13" height="11" viewBox="0 0 13 11" ><rect x="0" y="1.6" width="1.2" height="7.8" fill="#a8a8a8"/><rect x="11.8" y="1.6" width="1.2" height="7.8" fill="#a8a8a8"/><rect x="2.4" y="0" width="8.2" height="11" rx="1.2" fill="#a8a8a8"/><rect x="3.8" y="1.6" width="5.4" height="6.2" fill="#303030"/><rect x="5.2" y="8.8" width="2.6" height="1" fill="#303030"/></svg>
<span class="t" style="left:24px;top:2.5px;">Simulator</span>
<svg style="left:1195px;top:4px" width="3" height="11" viewBox="0 0 3 11" ><rect x="0.5" y="0" width="2" height="2" fill="#b4b4b4"/><rect x="0.5" y="4.3" width="2" height="2" fill="#b4b4b4"/><rect x="0.5" y="8.6" width="2" height="2" fill="#b4b4b4"/></svg>
<div class="tbar" style="top:19px;height:21px;border-bottom:1px solid #1d1d1d"></div>
<span class="t" style="left:4.5px;top:21.7px;">Simulator</span>
<svg style="left:60.5px;top:27.3px" width="8" height="4.5" viewBox="0 0 8 4.5" ><path d="M0 0 H8 L4.0 4.5 Z" fill="#a8a8a8"/></svg>
<div class="a" style="left:72.5px;top:19px;width:1px;height:20px;background:#1f1f1f"></div>
<span class="t" style="left:77px;top:21.7px;">Apple iPad (5th gen)</span>
<svg style="left:196.5px;top:27.3px" width="8" height="4.5" viewBox="0 0 8 4.5" ><path d="M0 0 H8 L4.0 4.5 Z" fill="#a8a8a8"/></svg>
<div class="a" style="left:208.5px;top:19px;width:1px;height:20px;background:#1f1f1f"></div>
<span class="t" style="left:214px;top:21.7px;">Scale</span>
<div class="a" style="left:253px;top:28.5px;width:99px;height:1.4px;background:#555"></div><div class="a" style="left:277px;top:24px;width:10px;height:10px;border-radius:5px;background:#999"></div>
<span class="t" style="left:361px;top:21.7px;">34</span>
<div class="a" style="left:384px;top:19px;width:1px;height:20px;background:#1f1f1f"></div>
<div class="a" style="left:385px;top:19px;width:84.5px;height:20px;background:#3f3f3f"></div>
<span class="t" style="left:391px;top:21.7px;">Fit to Screen</span>
<div class="a" style="left:469.5px;top:19px;width:1px;height:20px;background:#1f1f1f"></div>
<span class="t" style="left:477px;top:21.7px;">Rotate</span>
<svg style="left:520.3px;top:21.6px" width="15" height="14" viewBox="0 0 15 14" ><path d="M8.0 11.9 A5.3 5.3 0 1 1 6.7 1.6" fill="none" stroke="#a8a8a8" stroke-width="1.15"/><path d="M6.3 -0.7 L9.5 1.6 L6.3 3.9 Z" fill="#a8a8a8"/><path d="M10.7 4.1 L14.4 7.8 L10.7 11.5 L7 7.8 Z" fill="none" stroke="#a8a8a8" stroke-width="1.05"/></svg>
<svg style="left:538.8px;top:21.6px" width="15" height="14" viewBox="0 0 15 14" ><g transform="translate(15 0) scale(-1 1)"><path d="M8.0 11.9 A5.3 5.3 0 1 1 6.7 1.6" fill="none" stroke="#a8a8a8" stroke-width="1.15"/><path d="M6.3 -0.7 L9.5 1.6 L6.3 3.9 Z" fill="#a8a8a8"/><path d="M10.7 4.1 L14.4 7.8 L10.7 11.5 L7 7.8 Z" fill="none" stroke="#a8a8a8" stroke-width="1.05"/></g></svg>
<div class="a" style="left:555.5px;top:19px;width:1px;height:20px;background:#1f1f1f"></div>
<span class="t" style="left:562px;top:21.7px;">Safe Area</span>
<div class="a" style="left:624px;top:19px;width:1px;height:20px;background:#1f1f1f"></div>
<div class="a" style="left:1010px;top:19px;width:1px;height:20px;background:#1f1f1f"></div>
<span class="t" style="left:1015.5px;top:21.7px;">Play Unfocused</span>
<svg style="left:1107px;top:27.3px" width="8" height="4.5" viewBox="0 0 8 4.5" ><path d="M0 0 H8 L4.0 4.5 Z" fill="#a8a8a8"/></svg>
<div class="a" style="left:1118.5px;top:19px;width:1px;height:20px;background:#1f1f1f"></div>
<span class="t" style="left:1125.5px;top:21.7px;">Control Panel</span>
<div class="a" style="left:308px;top:49px;width:593px;height:838px;border:2.3px solid #fff;border-radius:31px;background:#1c1c1c"></div>
<div class="a" style="left:343px;top:120px;width:523px;height:696px;overflow:hidden;background:#7fe6e0">
<svg style="left:0;top:0" width="523" height="696" viewBox="343 595 523 696">
<defs>
<linearGradient id="sky" x1="0" y1="0" x2="0" y2="1">
<stop offset="0" stop-color="#3bd2dc"/><stop offset="0.19" stop-color="#55dcdf"/><stop offset="0.36" stop-color="#70e4e1"/>
<stop offset="0.57" stop-color="#8eece4"/><stop offset="0.675" stop-color="#a2f1e7"/><stop offset="0.72" stop-color="#86dfe4"/>
<stop offset="0.77" stop-color="#6cd1e2"/><stop offset="0.85" stop-color="#74d3e4"/><stop offset="0.93" stop-color="#92dfe9"/><stop offset="1" stop-color="#aae9ed"/>
</linearGradient>
<linearGradient id="ramp" x1="0" y1="0" x2="0" y2="1"><stop offset="0" stop-color="#ecfdfd"/><stop offset="1" stop-color="#c9fcfd"/></linearGradient>
<radialGradient id="bY" cx=".4" cy=".35" r=".7"><stop offset="0" stop-color="#fff27a"/><stop offset="1" stop-color="#f2c92e"/></radialGradient>
<radialGradient id="bP" cx=".4" cy=".35" r=".7"><stop offset="0" stop-color="#d77af2"/><stop offset="1" stop-color="#9a3fd6"/></radialGradient>
<radialGradient id="bB" cx=".4" cy=".35" r=".7"><stop offset="0" stop-color="#cfeaff"/><stop offset="1" stop-color="#79b6f2"/></radialGradient>
<radialGradient id="bG" cx=".4" cy=".35" r=".7"><stop offset="0" stop-color="#7ff0b0"/><stop offset="1" stop-color="#2fc07a"/></radialGradient>
<clipPath id="mid"><polygon points="494.7,884 671.4,883 686.5,935 724,1080 738.6,1134 738.6,1154 390,1154 415.7,1080 473.4,937.7"/></clipPath>
<clipPath id="lef"><polygon points="364,884 494.7,884 473.4,937.7 415.7,1080 390,1154 366.6,1213 362,1228 343,1228 343,906"/></clipPath>
<clipPath id="rig"><polygon points="671.4,883 806.8,882.6 866,942.7 866,1219 755.6,1219 737,1151 724,1080 686.5,935"/></clipPath>
</defs>
<rect x="343" y="595" width="523" height="290" fill="url(#sky)"/>
<defs><radialGradient id="cl" cx=".45" cy=".28" r=".8"><stop offset="0" stop-color="#d8fdf1" stop-opacity=".95"/><stop offset=".55" stop-color="#b6f5ea" stop-opacity=".8"/><stop offset="1" stop-color="#86e3e3" stop-opacity=".3"/></radialGradient><filter id="cb" x="-5%" y="-5%" width="110%" height="110%"><feGaussianBlur stdDeviation="0.9"/></filter></defs>
<g filter="url(#cb)">
<ellipse cx="361.0" cy="607.0" rx="22.1" ry="7.0" fill="#a4eee8" fill-opacity=".5"/>
<ellipse cx="430.0" cy="638.0" rx="72.7" ry="11.5" fill="#a4eee8" fill-opacity=".5"/>
<ellipse cx="523.0" cy="629.0" rx="36.8" ry="11.5" fill="#a4eee8" fill-opacity=".5"/>
<ellipse cx="605.0" cy="627.0" rx="44.2" ry="14.0" fill="#a4eee8" fill-opacity=".5"/>
<ellipse cx="672.5" cy="617.0" rx="14.3" ry="7.5" fill="#a4eee8" fill-opacity=".5"/>
<ellipse cx="713.5" cy="626.0" rx="16.1" ry="7.5" fill="#a4eee8" fill-opacity=".5"/>
<ellipse cx="793.0" cy="641.0" rx="44.2" ry="11.0" fill="#a4eee8" fill-opacity=".5"/>
<ellipse cx="673.5" cy="651.0" rx="33.6" ry="7.5" fill="#a4eee8" fill-opacity=".5"/>
<ellipse cx="566.5" cy="658.0" rx="29.0" ry="10.0" fill="#a4eee8" fill-opacity=".5"/>
<ellipse cx="453.5" cy="658.0" rx="46.5" ry="7.5" fill="#a4eee8" fill-opacity=".5"/>
<ellipse cx="369.5" cy="652.0" rx="22.5" ry="4.0" fill="#a4eee8" fill-opacity=".5"/>
<ellipse cx="759.0" cy="661.0" rx="20.2" ry="5.0" fill="#a4eee8" fill-opacity=".5"/>
<ellipse cx="352" cy="600" rx="11.5" ry="8.0" fill="url(#cl)"/>
<ellipse cx="366" cy="598" rx="10.3" ry="7.2" fill="url(#cl)"/>
<ellipse cx="378" cy="604" rx="8.0" ry="5.6" fill="url(#cl)"/>
<ellipse cx="345" cy="606" rx="9.2" ry="6.4" fill="url(#cl)"/>
<ellipse cx="360" cy="632" rx="10.3" ry="7.2" fill="url(#cl)"/>
<ellipse cx="375" cy="628" rx="12.6" ry="8.8" fill="url(#cl)"/>
<ellipse cx="392" cy="625" rx="13.8" ry="9.6" fill="url(#cl)"/>
<ellipse cx="408" cy="622" rx="13.8" ry="9.6" fill="url(#cl)"/>
<ellipse cx="424" cy="626" rx="12.6" ry="8.8" fill="url(#cl)"/>
<ellipse cx="440" cy="620" rx="13.8" ry="9.6" fill="url(#cl)"/>
<ellipse cx="456" cy="624" rx="12.6" ry="8.8" fill="url(#cl)"/>
<ellipse cx="472" cy="620" rx="12.6" ry="8.8" fill="url(#cl)"/>
<ellipse cx="488" cy="622" rx="12.6" ry="8.8" fill="url(#cl)"/>
<ellipse cx="500" cy="628" rx="10.3" ry="7.2" fill="url(#cl)"/>
<ellipse cx="415" cy="634" rx="13.8" ry="9.6" fill="url(#cl)"/>
<ellipse cx="450" cy="636" rx="11.5" ry="8.0" fill="url(#cl)"/>
<ellipse cx="385" cy="637" rx="10.3" ry="7.2" fill="url(#cl)"/>
<ellipse cx="492" cy="622" rx="10.3" ry="7.2" fill="url(#cl)"/>
<ellipse cx="505" cy="616" rx="12.6" ry="8.8" fill="url(#cl)"/>
<ellipse cx="520" cy="611" rx="12.6" ry="8.8" fill="url(#cl)"/>
<ellipse cx="534" cy="616" rx="13.8" ry="9.6" fill="url(#cl)"/>
<ellipse cx="548" cy="622" rx="12.6" ry="8.8" fill="url(#cl)"/>
<ellipse cx="556" cy="628" rx="8.0" ry="5.6" fill="url(#cl)"/>
<ellipse cx="515" cy="626" rx="11.5" ry="8.0" fill="url(#cl)"/>
<ellipse cx="535" cy="628" rx="10.3" ry="7.2" fill="url(#cl)"/>
<ellipse cx="566" cy="622" rx="10.3" ry="7.2" fill="url(#cl)"/>
<ellipse cx="578" cy="614" rx="13.8" ry="9.6" fill="url(#cl)"/>
<ellipse cx="592" cy="610" rx="14.9" ry="10.4" fill="url(#cl)"/>
<ellipse cx="606" cy="604" rx="14.9" ry="10.4" fill="url(#cl)"/>
<ellipse cx="620" cy="608" rx="14.9" ry="10.4" fill="url(#cl)"/>
<ellipse cx="634" cy="611" rx="13.8" ry="9.6" fill="url(#cl)"/>
<ellipse cx="644" cy="618" rx="10.3" ry="7.2" fill="url(#cl)"/>
<ellipse cx="600" cy="622" rx="13.8" ry="9.6" fill="url(#cl)"/>
<ellipse cx="622" cy="624" rx="12.6" ry="8.8" fill="url(#cl)"/>
<ellipse cx="584" cy="626" rx="10.3" ry="7.2" fill="url(#cl)"/>
<ellipse cx="666" cy="609" rx="10.3" ry="7.2" fill="url(#cl)"/>
<ellipse cx="675" cy="607" rx="11.5" ry="8.0" fill="url(#cl)"/>
<ellipse cx="680" cy="614" rx="9.2" ry="6.4" fill="url(#cl)"/>
<ellipse cx="668" cy="616" rx="9.2" ry="6.4" fill="url(#cl)"/>
<ellipse cx="703" cy="621" rx="8.0" ry="5.6" fill="url(#cl)"/>
<ellipse cx="712" cy="616" rx="10.3" ry="7.2" fill="url(#cl)"/>
<ellipse cx="721" cy="620" rx="9.2" ry="6.4" fill="url(#cl)"/>
<ellipse cx="726" cy="625" rx="5.8" ry="4.0" fill="url(#cl)"/>
<ellipse cx="750" cy="640" rx="5.8" ry="4.0" fill="url(#cl)"/>
<ellipse cx="762" cy="636" rx="9.2" ry="6.4" fill="url(#cl)"/>
<ellipse cx="776" cy="632" rx="10.3" ry="7.2" fill="url(#cl)"/>
<ellipse cx="790" cy="628" rx="12.6" ry="8.8" fill="url(#cl)"/>
<ellipse cx="804" cy="624" rx="12.6" ry="8.8" fill="url(#cl)"/>
<ellipse cx="816" cy="630" rx="10.3" ry="7.2" fill="url(#cl)"/>
<ellipse cx="828" cy="632" rx="8.0" ry="5.6" fill="url(#cl)"/>
<ellipse cx="836" cy="630" rx="5.8" ry="4.0" fill="url(#cl)"/>
<ellipse cx="800" cy="634" rx="10.3" ry="7.2" fill="url(#cl)"/>
<ellipse cx="852" cy="634" rx="8.0" ry="5.6" fill="url(#cl)"/>
<ellipse cx="862" cy="630" rx="10.3" ry="7.2" fill="url(#cl)"/>
<ellipse cx="866" cy="640" rx="8.0" ry="5.6" fill="url(#cl)"/>
<ellipse cx="644" cy="648" rx="8.0" ry="5.6" fill="url(#cl)"/>
<ellipse cx="656" cy="644" rx="11.5" ry="8.0" fill="url(#cl)"/>
<ellipse cx="670" cy="641" rx="12.6" ry="8.8" fill="url(#cl)"/>
<ellipse cx="684" cy="644" rx="11.5" ry="8.0" fill="url(#cl)"/>
<ellipse cx="696" cy="647" rx="9.2" ry="6.4" fill="url(#cl)"/>
<ellipse cx="705" cy="648" rx="5.8" ry="4.0" fill="url(#cl)"/>
<ellipse cx="672" cy="650" rx="10.3" ry="7.2" fill="url(#cl)"/>
<ellipse cx="543" cy="655" rx="9.2" ry="6.4" fill="url(#cl)"/>
<ellipse cx="552" cy="648" rx="10.3" ry="7.2" fill="url(#cl)"/>
<ellipse cx="560" cy="643" rx="10.3" ry="7.2" fill="url(#cl)"/>
<ellipse cx="570" cy="650" rx="10.3" ry="7.2" fill="url(#cl)"/>
<ellipse cx="580" cy="644" rx="11.5" ry="8.0" fill="url(#cl)"/>
<ellipse cx="590" cy="652" rx="9.2" ry="6.4" fill="url(#cl)"/>
<ellipse cx="562" cy="657" rx="10.3" ry="7.2" fill="url(#cl)"/>
<ellipse cx="580" cy="657" rx="9.2" ry="6.4" fill="url(#cl)"/>
<ellipse cx="410" cy="655" rx="8.0" ry="5.6" fill="url(#cl)"/>
<ellipse cx="424" cy="652" rx="9.2" ry="6.4" fill="url(#cl)"/>
<ellipse cx="440" cy="652" rx="10.3" ry="7.2" fill="url(#cl)"/>
<ellipse cx="456" cy="650" rx="10.3" ry="7.2" fill="url(#cl)"/>
<ellipse cx="470" cy="648" rx="11.5" ry="8.0" fill="url(#cl)"/>
<ellipse cx="484" cy="650" rx="11.5" ry="8.0" fill="url(#cl)"/>
<ellipse cx="496" cy="656" rx="9.2" ry="6.4" fill="url(#cl)"/>
<ellipse cx="470" cy="657" rx="9.2" ry="6.4" fill="url(#cl)"/>
<ellipse cx="350" cy="650" rx="5.8" ry="4.0" fill="url(#cl)"/>
<ellipse cx="364" cy="649" rx="5.8" ry="4.0" fill="url(#cl)"/>
<ellipse cx="378" cy="650" rx="5.8" ry="4.0" fill="url(#cl)"/>
<ellipse cx="390" cy="651" rx="4.6" ry="3.2" fill="url(#cl)"/>
<ellipse cx="742" cy="660" rx="5.8" ry="4.0" fill="url(#cl)"/>
<ellipse cx="754" cy="657" rx="6.9" ry="4.8" fill="url(#cl)"/>
<ellipse cx="766" cy="656" rx="6.9" ry="4.8" fill="url(#cl)"/>
<ellipse cx="776" cy="659" rx="5.8" ry="4.0" fill="url(#cl)"/>
<ellipse cx="424" cy="669" rx="6.9" ry="4.8" fill="url(#cl)"/>
<ellipse cx="434" cy="667" rx="8.0" ry="5.6" fill="url(#cl)"/>
<ellipse cx="442" cy="671" rx="5.8" ry="4.0" fill="url(#cl)"/>
<ellipse cx="795" cy="611" rx="5.8" ry="4.0" fill="url(#cl)"/>
<ellipse cx="799" cy="608" rx="4.6" ry="3.2" fill="url(#cl)"/>
<ellipse cx="528" cy="596" rx="6.9" ry="4.8" fill="url(#cl)"/>
<ellipse cx="540" cy="595" rx="6.9" ry="4.8" fill="url(#cl)"/>
<ellipse cx="552" cy="596" rx="5.8" ry="4.0" fill="url(#cl)"/>
<ellipse cx="522" cy="676" rx="22" ry="3" fill="#b6f5ea" fill-opacity=".45"/>
<ellipse cx="713" cy="673" rx="19" ry="3" fill="#b6f5ea" fill-opacity=".45"/>
<ellipse cx="809" cy="678" rx="22" ry="3" fill="#b6f5ea" fill-opacity=".45"/>
<ellipse cx="385" cy="678" rx="25" ry="4" fill="#b6f5ea" fill-opacity=".45"/>
<ellipse cx="640" cy="684" rx="18" ry="3" fill="#b6f5ea" fill-opacity=".45"/>
</g>
<polygon points="713.9,847.8 735.9,859.0 757.0,847.8 757.0,856.3 735.9,867.5 713.9,856.3" fill="#7eaef2"/>
<polyline points="713.9,856.3 735.9,867.5 757.0,856.3" fill="none" stroke="#e6cf52" stroke-width="1.2"/>
<polygon points="713.9,847.8 720.9,841.2 735.0,838.1 750.0,839.4 757.0,847.8 735.9,859.0" fill="#b7d8fb"/>
<polygon points="719.1,847.8 724.6,842.7 735.1,840.7 746.1,841.5 751.6,847.8 735.8,855.9" fill="none" stroke="#f2faff" stroke-width="1.1"/>
<path d="M715.8,828.1 Q716.6,842.1 723.1,852.1 Q734.6,856.1 745.1,852.1 Q751.6,842.1 751.4,828.1 Z" fill="#a8cdf8"/>
<path d="M718.3,839.1 Q734.6,845.1 749.6,839.1 L748.6,842.6 Q734.6,848.6 719.6,842.6 Z" fill="#9aabb6"/>
<path d="M722.1,849.6 Q734.6,854.6 746.1,849.6 L744.6,853.1 Q734.6,857.6 723.6,853.1 Z" fill="#f4fbff"/>
<ellipse cx="733.6" cy="828.1" rx="17.8" ry="8.4" fill="#d9edff"/>
<ellipse cx="733.6" cy="829.7" rx="14.2" ry="6.0" fill="#98c0f5"/>
<polygon points="774.6,870.0 798.4,882.1 821.2,870.0 821.2,879.2 798.4,891.3 774.6,879.2" fill="#7eaef2"/>
<polyline points="774.6,879.2 798.4,891.3 821.2,879.2" fill="none" stroke="#e6cf52" stroke-width="1.3"/>
<polygon points="774.6,870.0 782.2,862.8 797.4,859.5 813.6,860.9 821.2,870.0 798.4,882.1" fill="#b7d8fb"/>
<polygon points="780.2,870.0 786.2,864.5 797.5,862.3 809.4,863.2 815.3,870.0 798.3,878.7" fill="none" stroke="#f2faff" stroke-width="1.2"/>
<path d="M776.7,848.7 Q777.5,863.8 784.6,874.6 Q797.0,878.9 808.3,874.6 Q815.3,863.8 815.1,848.7 Z" fill="#a8cdf8"/>
<path d="M779.4,860.6 Q797.0,867.1 813.2,860.6 L812.1,864.4 Q797.0,870.8 780.8,864.4 Z" fill="#9aabb6"/>
<path d="M783.5,871.9 Q797.0,877.3 809.4,871.9 L807.8,875.7 Q797.0,880.6 785.1,875.7 Z" fill="#f4fbff"/>
<ellipse cx="795.9" cy="848.7" rx="19.2" ry="9.1" fill="#d9edff"/>
<ellipse cx="795.9" cy="850.4" rx="15.3" ry="6.5" fill="#98c0f5"/>
<polygon points="358.3,880.7 380.3,891.9 401.4,880.7 401.4,889.2 380.3,900.4 358.3,889.2" fill="#7eaef2"/>
<polyline points="358.3,889.2 380.3,900.4 401.4,889.2" fill="none" stroke="#e6cf52" stroke-width="1.2"/>
<polygon points="358.3,880.7 365.3,874.1 379.4,871.0 394.4,872.3 401.4,880.7 380.3,891.9" fill="#b7d8fb"/>
<polygon points="363.5,880.7 369.0,875.6 379.5,873.6 390.5,874.4 396.0,880.7 380.2,888.8" fill="none" stroke="#f2faff" stroke-width="1.1"/>
<path d="M360.2,861.0 Q361.0,875.0 367.5,885.0 Q379.0,889.0 389.5,885.0 Q396.0,875.0 395.8,861.0 Z" fill="#a8cdf8"/>
<path d="M362.7,872.0 Q379.0,878.0 394.0,872.0 L393.0,875.5 Q379.0,881.5 364.0,875.5 Z" fill="#9aabb6"/>
<path d="M366.5,882.5 Q379.0,887.5 390.5,882.5 L389.0,886.0 Q379.0,890.5 368.0,886.0 Z" fill="#f4fbff"/>
<ellipse cx="378" cy="861" rx="17.8" ry="8.4" fill="#d9edff"/>
<ellipse cx="378" cy="862.6" rx="14.2" ry="6.0" fill="#98c0f5"/>
<polygon points="421.6,862.4 440.5,872.1 458.6,862.4 458.6,869.8 440.5,879.4 421.6,869.8" fill="#7eaef2"/>
<polyline points="421.6,869.8 440.5,879.4 458.6,869.8" fill="none" stroke="#e6cf52" stroke-width="1.0"/>
<polygon points="421.6,862.4 427.6,856.8 439.7,854.1 452.6,855.2 458.6,862.4 440.5,872.1" fill="#b7d8fb"/>
<polygon points="426.0,862.4 430.8,858.1 439.8,856.3 449.2,857.0 454.0,862.4 440.4,869.4" fill="none" stroke="#f2faff" stroke-width="0.9"/>
<path d="M423.2,845.5 Q423.9,857.5 429.5,866.1 Q439.4,869.6 448.4,866.1 Q454.0,857.5 453.8,845.5 Z" fill="#a8cdf8"/>
<path d="M425.3,855.0 Q439.4,860.1 452.3,855.0 L451.4,858.0 Q439.4,863.1 426.5,858.0 Z" fill="#9aabb6"/>
<path d="M428.6,864.0 Q439.4,868.3 449.2,864.0 L448.0,867.0 Q439.4,870.9 429.9,867.0 Z" fill="#f4fbff"/>
<ellipse cx="438.5" cy="845.5" rx="15.3" ry="7.2" fill="#d9edff"/>
<ellipse cx="438.5" cy="846.9" rx="12.2" ry="5.2" fill="#98c0f5"/>
<circle cx="725.3" cy="787.8" r="13.5" fill="url(#bB)"/>
<ellipse cx="717.875" cy="787.8" rx="1.2" ry="10.8" fill="#fff" fill-opacity=".55" transform="rotate(25 725.3 787.8)"/>
<ellipse cx="722.5999999999999" cy="787.8" rx="1.2" ry="12.7" fill="#fff" fill-opacity=".55" transform="rotate(25 725.3 787.8)"/>
<ellipse cx="727.3249999999999" cy="787.8" rx="1.2" ry="12.8" fill="#fff" fill-opacity=".55" transform="rotate(25 725.3 787.8)"/>
<ellipse cx="732.05" cy="787.8" rx="1.2" ry="11.2" fill="#fff" fill-opacity=".55" transform="rotate(25 725.3 787.8)"/>
<circle cx="731.5" cy="815" r="13" fill="url(#bG)"/>
<ellipse cx="724.35" cy="815" rx="1.2" ry="10.4" fill="#1e9e62" fill-opacity=".55" transform="rotate(25 731.5 815)"/>
<ellipse cx="728.9" cy="815" rx="1.2" ry="12.2" fill="#1e9e62" fill-opacity=".55" transform="rotate(25 731.5 815)"/>
<ellipse cx="733.45" cy="815" rx="1.2" ry="12.3" fill="#1e9e62" fill-opacity=".55" transform="rotate(25 731.5 815)"/>
<ellipse cx="738.0" cy="815" rx="1.2" ry="10.8" fill="#1e9e62" fill-opacity=".55" transform="rotate(25 731.5 815)"/>
<circle cx="801.1" cy="803.7" r="15" fill="url(#bP)"/>
<ellipse cx="792.85" cy="803.7" rx="1.3" ry="12.0" fill="#b95be6" fill-opacity=".55" transform="rotate(25 801.1 803.7)"/>
<ellipse cx="798.1" cy="803.7" rx="1.3" ry="14.1" fill="#b95be6" fill-opacity=".55" transform="rotate(25 801.1 803.7)"/>
<ellipse cx="803.35" cy="803.7" rx="1.3" ry="14.2" fill="#b95be6" fill-opacity=".55" transform="rotate(25 801.1 803.7)"/>
<ellipse cx="808.6" cy="803.7" rx="1.3" ry="12.5" fill="#b95be6" fill-opacity=".55" transform="rotate(25 801.1 803.7)"/>
<circle cx="797.3" cy="834.7" r="14" fill="url(#bY)"/>
<ellipse cx="789.5999999999999" cy="834.7" rx="1.3" ry="11.2" fill="#e8b820" fill-opacity=".55" transform="rotate(25 797.3 834.7)"/>
<ellipse cx="794.5" cy="834.7" rx="1.3" ry="13.2" fill="#e8b820" fill-opacity=".55" transform="rotate(25 797.3 834.7)"/>
<ellipse cx="799.4" cy="834.7" rx="1.3" ry="13.3" fill="#e8b820" fill-opacity=".55" transform="rotate(25 797.3 834.7)"/>
<ellipse cx="804.3" cy="834.7" rx="1.3" ry="11.6" fill="#e8b820" fill-opacity=".55" transform="rotate(25 797.3 834.7)"/>
<circle cx="376" cy="811" r="14.5" fill="url(#bY)"/>
<ellipse cx="368.025" cy="811" rx="1.3" ry="11.6" fill="#e0b020" fill-opacity=".55" transform="rotate(25 376 811)"/>
<ellipse cx="373.1" cy="811" rx="1.3" ry="13.6" fill="#e0b020" fill-opacity=".55" transform="rotate(25 376 811)"/>
<ellipse cx="378.175" cy="811" rx="1.3" ry="13.8" fill="#e0b020" fill-opacity=".55" transform="rotate(25 376 811)"/>
<ellipse cx="383.25" cy="811" rx="1.3" ry="12.1" fill="#e0b020" fill-opacity=".55" transform="rotate(25 376 811)"/>
<circle cx="444" cy="804" r="13" fill="url(#bP)"/>
<ellipse cx="436.85" cy="804" rx="1.2" ry="10.4" fill="#b95be6" fill-opacity=".55" transform="rotate(25 444 804)"/>
<ellipse cx="441.4" cy="804" rx="1.2" ry="12.2" fill="#b95be6" fill-opacity=".55" transform="rotate(25 444 804)"/>
<ellipse cx="445.95" cy="804" rx="1.2" ry="12.3" fill="#b95be6" fill-opacity=".55" transform="rotate(25 444 804)"/>
<ellipse cx="450.5" cy="804" rx="1.2" ry="10.8" fill="#b95be6" fill-opacity=".55" transform="rotate(25 444 804)"/>
<circle cx="440" cy="831" r="12.5" fill="url(#bY)"/>
<ellipse cx="433.125" cy="831" rx="1.1" ry="10.0" fill="#e0b020" fill-opacity=".55" transform="rotate(25 440 831)"/>
<ellipse cx="437.5" cy="831" rx="1.1" ry="11.8" fill="#e0b020" fill-opacity=".55" transform="rotate(25 440 831)"/>
<ellipse cx="441.875" cy="831" rx="1.1" ry="11.9" fill="#e0b020" fill-opacity=".55" transform="rotate(25 440 831)"/>
<ellipse cx="446.25" cy="831" rx="1.1" ry="10.4" fill="#e0b020" fill-opacity=".55" transform="rotate(25 440 831)"/>
<circle cx="378" cy="846" r="13" fill="url(#bB)"/>
<ellipse cx="370.85" cy="846" rx="1.2" ry="10.4" fill="#fff" fill-opacity=".55" transform="rotate(25 378 846)"/>
<ellipse cx="375.4" cy="846" rx="1.2" ry="12.2" fill="#fff" fill-opacity=".55" transform="rotate(25 378 846)"/>
<ellipse cx="379.95" cy="846" rx="1.2" ry="12.3" fill="#fff" fill-opacity=".55" transform="rotate(25 378 846)"/>
<ellipse cx="384.5" cy="846" rx="1.2" ry="10.8" fill="#fff" fill-opacity=".55" transform="rotate(25 378 846)"/>
<polygon points="517,735 664.2,735 703,883 458,883" fill="url(#ramp)"/>
<polygon points="664.2,735 667,735 712,883 703,883" fill="#b4eef4"/>
<polygon points="517,735 514,735 449,883 458,883" fill="#bdf1f5"/>
<rect x="516" y="733.5" width="149" height="2" fill="#9ec8f4"/>
<rect x="549.5" y="705" width="16.3" height="28.5" fill="#fdf36e"/><rect x="616" y="705" width="16.3" height="28.5" fill="#fdf36e"/>
<rect x="549.5" y="716" width="16.3" height="1" fill="#f1d64e"/><rect x="616" y="716" width="16.3" height="1" fill="#f1d64e"/>
<polygon points="549.5,706.0 550.1,700.3 552.0,694.7 566.8,700.2 565.7,703.0 565.3,706.0" fill="#fdf36e" stroke="#eecb44" stroke-width=".5"/>
<polygon points="552.0,694.7 555.0,689.5 559.2,684.8 571.3,695.1 568.7,697.5 566.8,700.2" fill="#f7d648" stroke="#eecb44" stroke-width=".5"/>
<polygon points="559.2,684.8 564.3,680.7 570.2,677.4 578.1,691.3 574.4,693.0 571.3,695.1" fill="#fdf36e" stroke="#eecb44" stroke-width=".5"/>
<polygon points="570.2,677.4 576.7,675.0 583.7,673.5 586.5,689.3 582.1,690.0 578.1,691.3" fill="#fbe258" stroke="#eecb44" stroke-width=".5"/>
<polygon points="583.7,673.5 590.9,673.0 598.1,673.5 595.3,689.3 590.9,689.0 586.5,689.3" fill="#fff77a" stroke="#eecb44" stroke-width=".5"/>
<polygon points="598.1,673.5 605.1,675.0 611.6,677.4 603.7,691.3 599.7,690.0 595.3,689.3" fill="#fbe258" stroke="#eecb44" stroke-width=".5"/>
<polygon points="611.6,677.4 617.5,680.7 622.6,684.8 610.5,695.1 607.4,693.0 603.7,691.3" fill="#fdf36e" stroke="#eecb44" stroke-width=".5"/>
<polygon points="622.6,684.8 626.8,689.5 629.8,694.7 615.0,700.2 613.1,697.5 610.5,695.1" fill="#f7d648" stroke="#eecb44" stroke-width=".5"/>
<polygon points="629.8,694.7 631.7,700.3 632.3,706.0 616.5,706.0 616.1,703.0 615.0,700.2" fill="#fdf36e" stroke="#eecb44" stroke-width=".5"/>
<rect x="535.3" y="740.9" width="12" height="10" rx="3" fill="#ee7f88" transform="rotate(12 543.3 745.9)"/><rect x="547.3" y="739.9" width="4.5" height="17" fill="#f38d95"/>
<rect x="615.9" y="742.5" width="12" height="10" rx="3" fill="#ee7f88" transform="rotate(12 623.9 747.5)"/><rect x="627.9" y="741.5" width="4.5" height="17" fill="#f38d95"/>
<rect x="574" y="758" width="12" height="10" rx="3" fill="#ee7f88" transform="rotate(12 582 763)"/><rect x="586" y="757" width="4.5" height="17" fill="#f38d95"/>
<rect x="524.5" y="768.8" width="12" height="10" rx="3" fill="#ee7f88" transform="rotate(12 532.5 773.8)"/><rect x="536.5" y="767.8" width="4.5" height="17" fill="#f38d95"/>
<rect x="615.9" y="770.4" width="12" height="10" rx="3" fill="#ee7f88" transform="rotate(12 623.9 775.4)"/><rect x="627.9" y="769.4" width="4.5" height="17" fill="#f38d95"/>
<rect x="569.4" y="778.1" width="12" height="10" rx="3" fill="#ee7f88" transform="rotate(12 577.4 783.1)"/><rect x="581.4" y="777.1" width="4.5" height="17" fill="#f38d95"/>
<rect x="491.7" y="788" width="4" height="44" fill="#f4e84a"/>
<rect x="487.5" y="789" width="12.4" height="8" rx="3" fill="#d9f22a"/>
<rect x="487.5" y="797.5" width="12.4" height="8" rx="3" fill="#3a30d2"/>
<rect x="487.5" y="806" width="12.4" height="8" rx="3" fill="#1c8fe4"/>
<rect x="487.5" y="814.5" width="12.4" height="7.5" rx="3" fill="#f2a8e6"/>
<rect x="487.5" y="822" width="12.4" height="7.5" rx="3" fill="#c3a6f2"/>
<rect x="529.9" y="788" width="4" height="44" fill="#f4e84a"/>
<rect x="525.6999999999999" y="789" width="12.4" height="8" rx="3" fill="#d9f22a"/>
<rect x="525.6999999999999" y="797.5" width="12.4" height="8" rx="3" fill="#3a30d2"/>
<rect x="525.6999999999999" y="806" width="12.4" height="8" rx="3" fill="#1c8fe4"/>
<rect x="525.6999999999999" y="814.5" width="12.4" height="7.5" rx="3" fill="#f2a8e6"/>
<rect x="525.6999999999999" y="822" width="12.4" height="7.5" rx="3" fill="#c3a6f2"/>
<rect x="566.4" y="788" width="4" height="44" fill="#f4e84a"/>
<rect x="562.1999999999999" y="789" width="12.4" height="8" rx="3" fill="#d9f22a"/>
<rect x="562.1999999999999" y="797.5" width="12.4" height="8" rx="3" fill="#3a30d2"/>
<rect x="562.1999999999999" y="806" width="12.4" height="8" rx="3" fill="#1c8fe4"/>
<rect x="562.1999999999999" y="814.5" width="12.4" height="7.5" rx="3" fill="#f2a8e6"/>
<rect x="562.1999999999999" y="822" width="12.4" height="7.5" rx="3" fill="#c3a6f2"/>
<rect x="602.7" y="788" width="4" height="44" fill="#f4e84a"/>
<rect x="598.5" y="789" width="12.4" height="8" rx="3" fill="#d9f22a"/>
<rect x="598.5" y="797.5" width="12.4" height="8" rx="3" fill="#3a30d2"/>
<rect x="598.5" y="806" width="12.4" height="8" rx="3" fill="#1c8fe4"/>
<rect x="598.5" y="814.5" width="12.4" height="7.5" rx="3" fill="#f2a8e6"/>
<rect x="598.5" y="822" width="12.4" height="7.5" rx="3" fill="#c3a6f2"/>
<rect x="639.6" y="788" width="4" height="44" fill="#f4e84a"/>
<rect x="635.4" y="789" width="12.4" height="8" rx="3" fill="#d9f22a"/>
<rect x="635.4" y="797.5" width="12.4" height="8" rx="3" fill="#3a30d2"/>
<rect x="635.4" y="806" width="12.4" height="8" rx="3" fill="#1c8fe4"/>
<rect x="635.4" y="814.5" width="12.4" height="7.5" rx="3" fill="#f2a8e6"/>
<rect x="635.4" y="822" width="12.4" height="7.5" rx="3" fill="#c3a6f2"/>
<rect x="674.3" y="788" width="4" height="44" fill="#f4e84a"/>
<rect x="670.0999999999999" y="789" width="12.4" height="8" rx="3" fill="#d9f22a"/>
<rect x="670.0999999999999" y="797.5" width="12.4" height="8" rx="3" fill="#3a30d2"/>
<rect x="670.0999999999999" y="806" width="12.4" height="8" rx="3" fill="#1c8fe4"/>
<rect x="670.0999999999999" y="814.5" width="12.4" height="7.5" rx="3" fill="#f2a8e6"/>
<rect x="670.0999999999999" y="822" width="12.4" height="7.5" rx="3" fill="#c3a6f2"/>
<rect x="343" y="883" width="523" height="408" fill="#e7f9e3"/>
<polygon points="806.8,882.6 866,882.6 866,942.7" fill="#a8e6ec"/>
<polygon points="343,883 364,883 343,906" fill="#a8e6ec"/>
<g clip-path="url(#lef)">
<rect x="343" y="880" width="160" height="350" fill="#7fbcf9"/>
<polygon points="343,925 409.4,913 454.6,925 454.6,1040 343,1040" fill="#9be3fb"/>
<polygon points="343,918 409.4,905 454.6,917 500,917 500,926 454.6,926 409.4,914 343,927" fill="#f1feff"/>
<polygon points="343,975 391.9,993 443.3,1010.4 443.3,1260 343,1260" fill="#78b4f8"/>
<polygon points="343,975 391.9,990 446,1009 440,1022 391.9,1004 343,988" fill="#f1feff"/>
<polygon points="343,1135 395,1160 380,1230 343,1230" fill="#9be3fb"/>
<polygon points="343,1121 396,1147 390,1163 343,1140" fill="#f1feff"/>
<polygon points="343,1203 375,1203 362,1228 343,1228" fill="#f1feff"/>
</g>
<polygon points="390,1154 397,1154 372,1222 362,1228 366.6,1213" fill="#6e9aea"/>
<g clip-path="url(#rig)">
<rect x="660" y="880" width="210" height="345" fill="#7fbcf9"/>
<polygon points="686.5,931 754.2,915 839.4,931 866,945 866,1010 700,1010" fill="#9be3fb"/>
<polygon points="684,927 754.2,910.5 839.4,926 866,940 866,950 839.4,935 754.2,919.5 686.5,936" fill="#f1feff"/>
<polygon points="700,1005 786.8,967 866,994 866,1110 730,1150" fill="#78b4f8"/>
<polygon points="700,1000 786.8,962 866,989 866,1001 786.8,974 703,1012" fill="#f1feff"/>
<polygon points="735,1150 845.5,1100 866,1106 866,1200 745,1200" fill="#9be3fb"/>
<polygon points="733,1134 845.5,1086 866,1092 866,1107 845.5,1101 737,1150" fill="#f1feff"/>
<rect x="740" y="1194" width="130" height="16" fill="#f1feff"/><rect x="740" y="1209.7" width="130" height="10" fill="#a9bcbf"/>
</g>
<polygon points="737,1151 743,1151 761,1219 866,1219 866,1230 757,1230" fill="#6e96e6"/>
<g clip-path="url(#mid)">
<rect x="380" y="880" width="370" height="280" fill="#7fbcf9"/>
<polygon points="470,940 581.2,911 690,932 700,990 450,992" fill="#9be3fb"/>
<polygon points="465,936 581.2,907 692,929 694,938 581.2,917 467,946" fill="#f1feff"/>
<polygon points="450,993 577.4,968 700,990 735,1095 405,1097" fill="#78b4f8"/>
<polygon points="446,991.4 577.4,965.6 704,987.4 708,998.4 577.4,977 442,1003" fill="#f1feff"/>
<polygon points="400,1097 569.7,1058 735,1093 745,1140 385,1140" fill="#9be3fb"/>
<polygon points="404,1094.5 569.7,1055.7 733,1091.5 737,1106 569.7,1070.5 399,1109.5" fill="#f1feff"/>
<rect x="380" y="1133.7" width="370" height="13" fill="#f1feff"/><rect x="380" y="1146" width="370" height="8.5" fill="#a9bcbf"/>
</g>
<polygon points="390,1154 738.6,1154 741,1163 387,1163" fill="#6c94e4"/>
<path d="M494.7,884 L473.4,937.7 L415.7,1080 L390,1154" stroke="#6fa6f0" stroke-width="1.6" fill="none"/>
<path d="M671.4,883 L686.5,935 L724,1080 L738.6,1134" stroke="#6fa6f0" stroke-width="1.6" fill="none"/>
<rect x="364" y="882.6" width="443" height="1.6" fill="#e8fbff"/>
<path d="M453.5,916.4 L493.4,895.1 L518.5,914.5 V932.1 Q518.5,934.1 515.5,934.1 H456.5 Q453.5,936.0 453.5,934.0 Z" fill="#f7ec62" stroke="#f6ea60" stroke-width="3" stroke-linejoin="round"/>
<path d="M453.5,916.4 L493.4,895.1 L518.5,914.5 Z" fill="#fffb76" stroke="#fffb76" stroke-width="3" stroke-linejoin="round"/>
<path d="M454.5,925.25 H517.5" stroke="#d8cc48" stroke-width="1.2"/>
<path d="M458.5,921.202 H513.5" stroke="#fff" stroke-width="2.2" stroke-dasharray="3 3.2"/>
<path d="M458.5,930.1780000000001 H513.5" stroke="#fff" stroke-width="2.2" stroke-dasharray="3 3.2"/>
<path d="M636,909 L665.2,888.8 L700.5,909 V930 Q700.5,932 697.5,932 H639 Q636,932 636,930 Z" fill="#f7ec62" stroke="#f6ea60" stroke-width="3" stroke-linejoin="round"/>
<path d="M636,909 L665.2,888.8 L700.5,909 Z" fill="#fffb76" stroke="#fffb76" stroke-width="3" stroke-linejoin="round"/>
<path d="M637,920.5 H699.5" stroke="#d8cc48" stroke-width="1.2"/>
<path d="M641,915.67 H695.5" stroke="#fff" stroke-width="2.2" stroke-dasharray="3 3.2"/>
<path d="M641,926.38 H695.5" stroke="#fff" stroke-width="2.2" stroke-dasharray="3 3.2"/>
<path d="M527,1016.7 L571.2,984.1 L612.8,1016.7 V1038.0 Q612.8,1040.0 609.8,1040.0 H530 Q527,1040.0 527,1038.0 Z" fill="#f7ec62" stroke="#f6ea60" stroke-width="3" stroke-linejoin="round"/>
<path d="M527,1016.7 L571.2,984.1 L612.8,1016.7 Z" fill="#fffb76" stroke="#fffb76" stroke-width="3" stroke-linejoin="round"/>
<path d="M528,1028.35 H611.8" stroke="#d8cc48" stroke-width="1.2"/>
<path d="M532,1023.451 H607.8" stroke="#fff" stroke-width="2.2" stroke-dasharray="3 3.2"/>
<path d="M532,1034.314 H607.8" stroke="#fff" stroke-width="2.2" stroke-dasharray="3 3.2"/>
<path d="M343,947.8 L388,969 Q392,971 392.5,975 L394.4,1000 Q394,1003 390,1004 L343,1011 Z" fill="#f7ec62"/><path d="M343,947.8 L388,969 Q391,971 388,973 L343,981 Z" fill="#fffb76"/><path d="M343,996 L393,988" stroke="#d8cc48" stroke-width="1.2"/><path d="M343,988 L390,980 M343,1004 L391,996.5" stroke="#fff" stroke-width="2.2" stroke-dasharray="3 3.2"/>
<path d="M796.8,951.5 L749,971.5 Q746,973 746.5,977 L746.7,992 Q747,995 751,996.5 L813,1016 Q817,1017 817.5,1013 L820.6,996 Q821,992 819,989 Z" fill="#f7ec62"/><path d="M796.8,951.5 L749,971.5 Q746,973.5 750,975 L817,994.5 Q821,995 819,990 Z" fill="#fffb76"/><path d="M747,984.5 L818,1005" stroke="#d8cc48" stroke-width="1.2"/><path d="M751,979.5 L816,999 M751,990.5 L814,1010" stroke="#fff" stroke-width="2.2" stroke-dasharray="3 3.2"/>
<clipPath id="scr"><rect x="343" y="595" width="523" height="696"/></clipPath>
<g clip-path="url(#scr)">
<ellipse cx="541.8" cy="1283" rx="216" ry="135.5" fill="#79c6f8" transform="rotate(1.5 541.8 1283)"/>
<ellipse cx="541.8" cy="1286" rx="210" ry="132" fill="#9efdfe" transform="rotate(1.5 541.8 1286)"/>
<rect x="527.6" y="1156.7" width="19" height="5.6" rx="2.8" fill="#fff" transform="rotate(80 537.1 1159.5)"/>
<rect x="585.0" y="1165.0" width="19" height="5.6" rx="2.8" fill="#fff" transform="rotate(70 594.5 1167.8)"/>
<rect x="647.0" y="1179.0" width="19" height="5.6" rx="2.8" fill="#fff" transform="rotate(60 656.5 1181.8)"/>
<rect x="453.2" y="1166.6000000000001" width="19" height="5.6" rx="2.8" fill="#fff" transform="rotate(-20 462.7 1169.4)"/>
<rect x="509.0" y="1179.0" width="19" height="5.6" rx="2.8" fill="#fff" transform="rotate(-28 518.5 1181.8)"/>
<rect x="428.4" y="1194.5" width="19" height="5.6" rx="2.8" fill="#fff" transform="rotate(85 437.9 1197.3)"/>
<rect x="488.9" y="1208.4" width="19" height="5.6" rx="2.8" fill="#fff" transform="rotate(88 498.4 1211.2)"/>
<rect x="569.5" y="1192.9" width="19" height="5.6" rx="2.8" fill="#fff" transform="rotate(-30 579 1195.7)"/>
<rect x="552.4" y="1223.9" width="19" height="5.6" rx="2.8" fill="#fff" transform="rotate(78 561.9 1226.7)"/>
<rect x="633.0" y="1206.9" width="19" height="5.6" rx="2.8" fill="#fff" transform="rotate(-32 642.5 1209.7)"/>
<rect x="400.5" y="1223.9" width="19" height="5.6" rx="2.8" fill="#fff" transform="rotate(-25 410 1226.7)"/>
<rect x="369.5" y="1262.7" width="19" height="5.6" rx="2.8" fill="#fff" transform="rotate(76 379 1265.5)"/>
<rect x="464.1" y="1241.0" width="19" height="5.6" rx="2.8" fill="#fff" transform="rotate(-28 473.6 1243.8)"/>
<rect x="436.2" y="1276.6000000000001" width="19" height="5.6" rx="2.8" fill="#fff" transform="rotate(85 445.7 1279.4)"/>
<rect x="620.6" y="1242.5" width="19" height="5.6" rx="2.8" fill="#fff" transform="rotate(70 630.1 1245.3)"/>
<rect x="698.1" y="1223.9" width="19" height="5.6" rx="2.8" fill="#fff" transform="rotate(-32 707.6 1226.7)"/>
<rect x="693.5" y="1256.5" width="19" height="5.6" rx="2.8" fill="#fff" transform="rotate(65 703 1259.3)"/>
<rect x="606.7" y="1276.6000000000001" width="19" height="5.6" rx="2.8" fill="#fff" transform="rotate(-35 616.2 1279.4)"/>
<rect x="340.5" y="1227.2" width="19" height="5.6" rx="2.8" fill="#fff" transform="rotate(-25 350 1230)"/>
<ellipse cx="531.9" cy="1277" rx="56" ry="38" fill="#78c8f9"/><ellipse cx="531.9" cy="1278.5" rx="45" ry="30" fill="#95ecfc"/>
<ellipse cx="531.9" cy="1277" rx="28.7" ry="20" fill="#f6f272"/><ellipse cx="531.9" cy="1278" rx="15" ry="10.5" fill="#5ef8fa"/>
<polygon points="811,1291 832,1256 866,1237 866,1291" fill="#78c4f8"/><polygon points="817,1291 836,1260 866,1243 866,1291" fill="#9efdfe"/>
</g>
<polygon points="343,872.4 435.6,872.4 434,875.6 343,875.6" fill="#26262e"/><polygon points="343,875.5 434,875.5 431.5,877.8 343,877.8" fill="#fff"/>
<polygon points="343,845.2 456.6,845.2 443.2,872.6 343,872.6" fill="#fff"/>
<polygon points="343,846.4 454,846.4 441.6,872.4 343,872.4" fill="#ff3d93"/>
<text x="349" y="862.8" font-family="Liberation Sans,Noto Sans CJK KR,NanumGothic,sans-serif" font-size="9.6" font-weight="500" fill="#fff" textLength="80.7" lengthAdjust="spacingAndGlyphs">결승선에 도달하라!</text>
</svg>
</div>
</div>
<div class="panel" style="left:1211px;top:73px;width:836px;height:666px;overflow:hidden">
<div class="tabbar"></div>
<div class="tab" style="left:0;width:96px"></div>
<svg style="left:8px;top:5px" width="11" height="10" viewBox="0 0 11 10" ><path d="M3.4 1.2 H10.8 M3.4 5 H10.8 M3.4 8.8 H10.8" stroke="#a8a8a8" stroke-width="1.2"/><path d="M1.4 0 V9 M0 1.4 H2.8" stroke="#a8a8a8" stroke-width="1"/><rect x="0.8" y="4.4" width="1.3" height="1.3" fill="#a8a8a8"/><rect x="0.8" y="8.2" width="1.3" height="1.3" fill="#a8a8a8"/></svg>
<span class="t" style="left:24px;top:2.5px;">Hierarchy</span>
<svg style="left:802px;top:4px" width="10" height="11" viewBox="0 0 10 11" ><path d="M7.4 5.4 V3.1 A2.35 2.35 0 0 0 2.7 3.1 V3.6" fill="none" stroke="#b4b4b4" stroke-width="1.15"/><rect x="0.8" y="5.6" width="7.8" height="4.6" rx="0.8" fill="none" stroke="#b4b4b4" stroke-width="1.25"/></svg>
<svg style="left:822px;top:4px" width="3" height="11" viewBox="0 0 3 11" ><rect x="0.5" y="0" width="2" height="2" fill="#b4b4b4"/><rect x="0.5" y="4.3" width="2" height="2" fill="#b4b4b4"/><rect x="0.5" y="8.6" width="2" height="2" fill="#b4b4b4"/></svg>
<div class="tbar" style="top:19px;height:21px;border-bottom:1px solid #1e1e1e"></div>
<svg style="left:7px;top:23px" width="12" height="12" viewBox="0 0 12 12" ><path d="M6 0 V12 M0 6 H12" stroke="#b4b4b4" stroke-width="1.6"/></svg>
<svg style="left:24px;top:27.5px" width="7" height="4" viewBox="0 0 7 4" ><path d="M0 0 H7 L3.5 4 Z" fill="#a8a8a8"/></svg>
<div class="a" style="left:506px;top:21.5px;width:326px;height:15.5px;background:#222;border:1px solid #191919;border-radius:3px"></div>
<svg style="left:511px;top:24.5px" width="11" height="9" viewBox="0 0 11 9" ><circle cx="3.4" cy="3.4" r="2.6" fill="none" stroke="#a0a0a0" stroke-width="1.3"/><path d="M5.3 5.3 L8 8" stroke="#a0a0a0" stroke-width="1.5"/><path d="M7.6 3 H10.6 L9.1 4.8 Z" fill="#a0a0a0"/></svg>
<div class="a" style="left:815.5px;top:22.5px;width:16px;height:13.5px;background:#2a2a2a;border-left:1px solid #1b1b1b;border-radius:0 2px 2px 0"></div>
<span class="t " style="left:526px;top:21px;color:#6c6c6c">All</span>
<svg style="left:817px;top:21.8px" width="14" height="14" viewBox="0 0 14 14" ><rect x="4.2" y="0.8" width="9" height="9" rx="1" fill="none" stroke="#b4b4b4" stroke-width="1.1"/><rect x="1" y="9" width="4" height="4" fill="#2d2d2d" stroke="#b4b4b4" stroke-width="1.1"/><path d="M5.2 8.8 L10.5 3.5 M7.3 3.4 H10.6 V6.7" fill="none" stroke="#b4b4b4" stroke-width="1.1"/></svg>
<div class="a" style="left:0;top:40px;width:32px;height:626px;background:#242424"></div>
<div class="a" style="left:823px;top:40px;width:13px;height:626px;background:#2a2a2a;border-left:1px solid #272727"></div>
<div class="a" style="left:825.5px;top:56px;width:9px;height:470px;background:#4a4a4a;border-radius:5px"></div>
<svg style="left:826px;top:45px" width="8" height="5" viewBox="0 0 8 5" ><path d="M0 5 H8 L4 0 Z" fill="#a0a0a0"/></svg>
<svg style="left:826px;top:656px" width="8" height="5" viewBox="0 0 8 5" ><path d="M0 0 H8 L4 5 Z" fill="#a0a0a0"/></svg>
<div class="a" style="left:0;top:40px;width:823px;height:16px;background:#3e3e3e"></div>
<svg style="left:34px;top:43px" width="10" height="10" viewBox="0 0 10 10" ><path d="M0.5 1 H9.5 L5 9 Z" fill="#595959"/></svg>
<svg style="left:47px;top:40.5px" width="15" height="15" viewBox="0 0 16 16" ><g fill="#d0d0d0"><path d="M8 0.8 L14.6 4.5 V11.7 L8 15.4 L1.4 11.7 V4.5 Z" /></g><g fill="none" stroke="#2d2d2d" stroke-width="1.5" stroke-linejoin="miter"><path d="M8 0.8 V5.2 M14.6 11.7 L10.8 9.6 M1.4 11.7 L5.2 9.6"/></g><g fill="#2d2d2d"><path d="M8 5.2 L10.9 6.8 L8 8.4 L5.1 6.8 Z"/><path d="M4.3 8.0 L7.2 9.7 V12.9 L4.3 11.3 Z"/><path d="M11.7 8.0 L8.8 9.7 V12.9 L11.7 11.3 Z"/></g></svg>
<span class="t " style="left:65px;top:40px;font-weight:bold;color:#b4b4b4">Intro</span>
<svg style="left:810px;top:43px" width="3" height="11" viewBox="0 0 3 11" ><rect x="0.5" y="0" width="2" height="2" fill="#a0a0a0"/><rect x="0.5" y="4.3" width="2" height="2" fill="#a0a0a0"/><rect x="0.5" y="8.6" width="2" height="2" fill="#a0a0a0"/></svg>
<svg style="left:60px;top:56px" width="16" height="16" viewBox="0 0 16 16" ><path d="M8 1.3 L14 4.6 V11.4 L8 14.7 L2 11.4 V4.6 Z M2 4.6 L8 7.9 L14 4.6 M8 7.9 V14.7" fill="none" stroke="#6a6a6a" stroke-width="1.15" stroke-linejoin="round"/></svg>
<span class="t dim" style="left:78px;top:56px;">Main Camera</span>
<svg style="left:48px;top:75px" width="10" height="10" viewBox="0 0 10 10" ><path d="M1 0.5 L9 5 L1 9.5 Z" fill="#5c5c5c"/></svg>
<svg style="left:60px;top:72px" width="16" height="16" viewBox="0 0 16 16" ><path d="M8 1.3 L14 4.6 V11.4 L8 14.7 L2 11.4 V4.6 Z M2 4.6 L8 7.9 L14 4.6 M8 7.9 V14.7" fill="none" stroke="#a2a2a2" stroke-width="1.15" stroke-linejoin="round"/></svg>
<span class="t " style="left:78px;top:72px;">Destination</span>
<svg style="left:60px;top:88px" width="16" height="16" viewBox="0 0 16 16" ><path d="M8 1.3 L14 4.6 V11.4 L8 14.7 L2 11.4 V4.6 Z M2 4.6 L8 7.9 L14 4.6 M8 7.9 V14.7" fill="none" stroke="#a2a2a2" stroke-width="1.15" stroke-linejoin="round"/></svg>
<span class="t " style="left:78px;top:88px;">Directional Light</span>
<svg style="left:48px;top:107px" width="10" height="10" viewBox="0 0 10 10" ><path d="M1 0.5 L9 5 L1 9.5 Z" fill="#5c5c5c"/></svg>
<svg style="left:60px;top:104px" width="16" height="16" viewBox="0 0 16 16" ><path d="M8 1.3 L14 4.6 V11.4 L8 14.7 L2 11.4 V4.6 Z M2 4.6 L8 7.9 L14 4.6 M8 7.9 V14.7" fill="none" stroke="#a2a2a2" stroke-width="1.15" stroke-linejoin="round"/></svg>
<span class="t " style="left:78px;top:104px;">Level</span>
<svg style="left:48px;top:123px" width="10" height="10" viewBox="0 0 10 10" ><path d="M1 0.5 L9 5 L1 9.5 Z" fill="#5c5c5c"/></svg>
<svg style="left:60px;top:120px" width="16" height="16" viewBox="0 0 16 16" ><path d="M8 1.3 L14 4.6 V11.4 L8 14.7 L2 11.4 V4.6 Z M2 4.6 L8 7.9 L14 4.6 M8 7.9 V14.7" fill="none" stroke="#a2a2a2" stroke-width="1.15" stroke-linejoin="round"/></svg>
<span class="t " style="left:78px;top:120px;">Obstacle</span>
<svg style="left:48px;top:139px" width="10" height="10" viewBox="0 0 10 10" ><path d="M1 0.5 L9 5 L1 9.5 Z" fill="#5c5c5c"/></svg>
<svg style="left:60px;top:136px" width="16" height="16" viewBox="0 0 16 16" ><path d="M8 1.3 L14 4.6 V11.4 L8 14.7 L2 11.4 V4.6 Z M2 4.6 L8 7.9 L14 4.6 M8 7.9 V14.7" fill="none" stroke="#a2a2a2" stroke-width="1.15" stroke-linejoin="round"/></svg>
<span class="t " style="left:78px;top:136px;">UI</span>
<svg style="left:60px;top:152px" width="16" height="16" viewBox="0 0 16 16" ><path d="M8 1.3 L14 4.6 V11.4 L8 14.7 L2 11.4 V4.6 Z M2 4.6 L8 7.9 L14 4.6 M8 7.9 V14.7" fill="none" stroke="#a2a2a2" stroke-width="1.15" stroke-linejoin="round"/></svg>
<span class="t " style="left:78px;top:152px;">EventSystem</span>
<svg style="left:60px;top:168px" width="16" height="16" viewBox="0 0 16 16" ><path d="M8 1.3 L14 4.6 V11.4 L8 14.7 L2 11.4 V4.6 Z M2 4.6 L8 7.9 L14 4.6 M8 7.9 V14.7" fill="none" stroke="#a2a2a2" stroke-width="1.15" stroke-linejoin="round"/></svg>
<span class="t " style="left:78px;top:168px;">Directional Light (1)</span>
<svg style="left:60px;top:184px" width="16" height="16" viewBox="0 0 16 16" ><path d="M8 1.3 L14 4.6 V11.4 L8 14.7 L2 11.4 V4.6 Z M2 4.6 L8 7.9 L14 4.6 M8 7.9 V14.7" fill="none" stroke="#a2a2a2" stroke-width="1.15" stroke-linejoin="round"/></svg>
<span class="t " style="left:78px;top:184px;">UIManager</span>
<svg style="left:60px;top:200px" width="16" height="16" viewBox="0 0 16 16" ><path d="M8 1.3 L14 4.6 V11.4 L8 14.7 L2 11.4 V4.6 Z M2 4.6 L8 7.9 L14 4.6 M8 7.9 V14.7" fill="none" stroke="#a2a2a2" stroke-width="1.15" stroke-linejoin="round"/></svg>
<span class="t " style="left:78px;top:200px;">SceneManager</span>
<svg style="left:48px;top:219px" width="10" height="10" viewBox="0 0 10 10" ><path d="M1 0.5 L9 5 L1 9.5 Z" fill="#5c5c5c"/></svg>
<svg style="left:60px;top:216px" width="16" height="16" viewBox="0 0 16 16" ><path d="M8 1.3 L14 4.6 V11.4 L8 14.7 L2 11.4 V4.6 Z M2 4.6 L8 7.9 L14 4.6 M8 7.9 V14.7" fill="none" stroke="#a2a2a2" stroke-width="1.15" stroke-linejoin="round"/></svg>
<span class="t " style="left:78px;top:216px;">Cinemachine</span>
<svg style="left:60px;top:232px" width="16" height="16" viewBox="0 0 16 16" ><path d="M8 1.3 L14 4.6 V11.4 L8 14.7 L2 11.4 V4.6 Z M2 4.6 L8 7.9 L14 4.6 M8 7.9 V14.7" fill="none" stroke="#a2a2a2" stroke-width="1.15" stroke-linejoin="round"/></svg>
<span class="t " style="left:78px;top:232px;">Sparks 0(Clone)</span>
<svg style="left:60px;top:248px" width="16" height="16" viewBox="0 0 16 16" ><path d="M8 1.3 L14 4.6 V11.4 L8 14.7 L2 11.4 V4.6 Z M2 4.6 L8 7.9 L14 4.6 M8 7.9 V14.7" fill="none" stroke="#a2a2a2" stroke-width="1.15" stroke-linejoin="round"/></svg>
<span class="t " style="left:78px;top:248px;">Sparks 0(Clone)</span>
<svg style="left:60px;top:264px" width="16" height="16" viewBox="0 0 16 16" ><path d="M8 1.3 L14 4.6 V11.4 L8 14.7 L2 11.4 V4.6 Z M2 4.6 L8 7.9 L14 4.6 M8 7.9 V14.7" fill="none" stroke="#a2a2a2" stroke-width="1.15" stroke-linejoin="round"/></svg>
<span class="t " style="left:78px;top:264px;">Sparks 0(Clone)</span>
<svg style="left:60px;top:280px" width="16" height="16" viewBox="0 0 16 16" ><path d="M8 1.3 L14 4.6 V11.4 L8 14.7 L2 11.4 V4.6 Z M2 4.6 L8 7.9 L14 4.6 M8 7.9 V14.7" fill="none" stroke="#a2a2a2" stroke-width="1.15" stroke-linejoin="round"/></svg>
<span class="t " style="left:78px;top:280px;">Sparks 0(Clone)</span>
<svg style="left:60px;top:296px" width="16" height="16" viewBox="0 0 16 16" ><path d="M8 1.3 L14 4.6 V11.4 L8 14.7 L2 11.4 V4.6 Z M2 4.6 L8 7.9 L14 4.6 M8 7.9 V14.7" fill="none" stroke="#a2a2a2" stroke-width="1.15" stroke-linejoin="round"/></svg>
<span class="t " style="left:78px;top:296px;">Sparks 0(Clone)</span>
<svg style="left:60px;top:312px" width="16" height="16" viewBox="0 0 16 16" ><path d="M8 1.3 L14 4.6 V11.4 L8 14.7 L2 11.4 V4.6 Z M2 4.6 L8 7.9 L14 4.6 M8 7.9 V14.7" fill="none" stroke="#a2a2a2" stroke-width="1.15" stroke-linejoin="round"/></svg>
<span class="t " style="left:78px;top:312px;">Sparks 0(Clone)</span>
<svg style="left:60px;top:328px" width="16" height="16" viewBox="0 0 16 16" ><path d="M8 1.3 L14 4.6 V11.4 L8 14.7 L2 11.4 V4.6 Z M2 4.6 L8 7.9 L14 4.6 M8 7.9 V14.7" fill="none" stroke="#a2a2a2" stroke-width="1.15" stroke-linejoin="round"/></svg>
<span class="t " style="left:78px;top:328px;">Sparks 0(Clone)</span>
<svg style="left:60px;top:344px" width="16" height="16" viewBox="0 0 16 16" ><path d="M8 1.3 L14 4.6 V11.4 L8 14.7 L2 11.4 V4.6 Z M2 4.6 L8 7.9 L14 4.6 M8 7.9 V14.7" fill="none" stroke="#a2a2a2" stroke-width="1.15" stroke-linejoin="round"/></svg>
<span class="t " style="left:78px;top:344px;">Sparks 0(Clone)</span>
<svg style="left:60px;top:360px" width="16" height="16" viewBox="0 0 16 16" ><path d="M8 1.3 L14 4.6 V11.4 L8 14.7 L2 11.4 V4.6 Z M2 4.6 L8 7.9 L14 4.6 M8 7.9 V14.7" fill="none" stroke="#a2a2a2" stroke-width="1.15" stroke-linejoin="round"/></svg>
<span class="t " style="left:78px;top:360px;">Sparks 1(Clone)</span>
<svg style="left:60px;top:376px" width="16" height="16" viewBox="0 0 16 16" ><path d="M8 1.3 L14 4.6 V11.4 L8 14.7 L2 11.4 V4.6 Z M2 4.6 L8 7.9 L14 4.6 M8 7.9 V14.7" fill="none" stroke="#a2a2a2" stroke-width="1.15" stroke-linejoin="round"/></svg>
<span class="t " style="left:78px;top:376px;">Sparks 1(Clone)</span>
<svg style="left:60px;top:392px" width="16" height="16" viewBox="0 0 16 16" ><path d="M8 1.3 L14 4.6 V11.4 L8 14.7 L2 11.4 V4.6 Z M2 4.6 L8 7.9 L14 4.6 M8 7.9 V14.7" fill="none" stroke="#a2a2a2" stroke-width="1.15" stroke-linejoin="round"/></svg>
<span class="t " style="left:78px;top:392px;">Sparks 1(Clone)</span>
<svg style="left:60px;top:408px" width="16" height="16" viewBox="0 0 16 16" ><path d="M8 1.3 L14 4.6 V11.4 L8 14.7 L2 11.4 V4.6 Z M2 4.6 L8 7.9 L14 4.6 M8 7.9 V14.7" fill="none" stroke="#a2a2a2" stroke-width="1.15" stroke-linejoin="round"/></svg>
<span class="t " style="left:78px;top:408px;">Sparks 1(Clone)</span>
<svg style="left:60px;top:424px" width="16" height="16" viewBox="0 0 16 16" ><path d="M8 1.3 L14 4.6 V11.4 L8 14.7 L2 11.4 V4.6 Z M2 4.6 L8 7.9 L14 4.6 M8 7.9 V14.7" fill="none" stroke="#a2a2a2" stroke-width="1.15" stroke-linejoin="round"/></svg>
<span class="t " style="left:78px;top:424px;">Sparks 1(Clone)</span>
<svg style="left:60px;top:440px" width="16" height="16" viewBox="0 0 16 16" ><path d="M8 1.3 L14 4.6 V11.4 L8 14.7 L2 11.4 V4.6 Z M2 4.6 L8 7.9 L14 4.6 M8 7.9 V14.7" fill="none" stroke="#a2a2a2" stroke-width="1.15" stroke-linejoin="round"/></svg>
<span class="t " style="left:78px;top:440px;">Sparks 1(Clone)</span>
<svg style="left:60px;top:456px" width="16" height="16" viewBox="0 0 16 16" ><path d="M8 1.3 L14 4.6 V11.4 L8 14.7 L2 11.4 V4.6 Z M2 4.6 L8 7.9 L14 4.6 M8 7.9 V14.7" fill="none" stroke="#a2a2a2" stroke-width="1.15" stroke-linejoin="round"/></svg>
<span class="t " style="left:78px;top:456px;">Sparks 1(Clone)</span>
<svg style="left:60px;top:472px" width="16" height="16" viewBox="0 0 16 16" ><path d="M8 1.3 L14 4.6 V11.4 L8 14.7 L2 11.4 V4.6 Z M2 4.6 L8 7.9 L14 4.6 M8 7.9 V14.7" fill="none" stroke="#a2a2a2" stroke-width="1.15" stroke-linejoin="round"/></svg>
<span class="t " style="left:78px;top:472px;">Sparks 1(Clone)</span>
<svg style="left:60px;top:488px" width="16" height="16" viewBox="0 0 16 16" ><path d="M8 1.3 L14 4.6 V11.4 L8 14.7 L2 11.4 V4.6 Z M2 4.6 L8 7.9 L14 4.6 M8 7.9 V14.7" fill="none" stroke="#a2a2a2" stroke-width="1.15" stroke-linejoin="round"/></svg>
<span class="t " style="left:78px;top:488px;">Sparks 0(Clone)</span>
<svg style="left:60px;top:504px" width="16" height="16" viewBox="0 0 16 16" ><path d="M8 1.3 L14 4.6 V11.4 L8 14.7 L2 11.4 V4.6 Z M2 4.6 L8 7.9 L14 4.6 M8 7.9 V14.7" fill="none" stroke="#a2a2a2" stroke-width="1.15" stroke-linejoin="round"/></svg>
<span class="t " style="left:78px;top:504px;">Sparks 0(Clone)</span>
<svg style="left:60px;top:520px" width="16" height="16" viewBox="0 0 16 16" ><path d="M8 1.3 L14 4.6 V11.4 L8 14.7 L2 11.4 V4.6 Z M2 4.6 L8 7.9 L14 4.6 M8 7.9 V14.7" fill="none" stroke="#a2a2a2" stroke-width="1.15" stroke-linejoin="round"/></svg>
<span class="t " style="left:78px;top:520px;">Sparks 0(Clone)</span>
<svg style="left:60px;top:536px" width="16" height="16" viewBox="0 0 16 16" ><path d="M8 1.3 L14 4.6 V11.4 L8 14.7 L2 11.4 V4.6 Z M2 4.6 L8 7.9 L14 4.6 M8 7.9 V14.7" fill="none" stroke="#a2a2a2" stroke-width="1.15" stroke-linejoin="round"/></svg>
<span class="t " style="left:78px;top:536px;">Sparks 0(Clone)</span>
<svg style="left:60px;top:552px" width="16" height="16" viewBox="0 0 16 16" ><path d="M8 1.3 L14 4.6 V11.4 L8 14.7 L2 11.4 V4.6 Z M2 4.6 L8 7.9 L14 4.6 M8 7.9 V14.7" fill="none" stroke="#a2a2a2" stroke-width="1.15" stroke-linejoin="round"/></svg>
<span class="t " style="left:78px;top:552px;">Sparks 0(Clone)</span>
<svg style="left:60px;top:568px" width="16" height="16" viewBox="0 0 16 16" ><path d="M8 1.3 L14 4.6 V11.4 L8 14.7 L2 11.4 V4.6 Z M2 4.6 L8 7.9 L14 4.6 M8 7.9 V14.7" fill="none" stroke="#a2a2a2" stroke-width="1.15" stroke-linejoin="round"/></svg>
<span class="t " style="left:78px;top:568px;">Sparks 0(Clone)</span>
<svg style="left:60px;top:584px" width="16" height="16" viewBox="0 0 16 16" ><path d="M8 1.3 L14 4.6 V11.4 L8 14.7 L2 11.4 V4.6 Z M2 4.6 L8 7.9 L14 4.6 M8 7.9 V14.7" fill="none" stroke="#a2a2a2" stroke-width="1.15" stroke-linejoin="round"/></svg>
<span class="t " style="left:78px;top:584px;">Sparks 0(Clone)</span>
<svg style="left:60px;top:600px" width="16" height="16" viewBox="0 0 16 16" ><path d="M8 1.3 L14 4.6 V11.4 L8 14.7 L2 11.4 V4.6 Z M2 4.6 L8 7.9 L14 4.6 M8 7.9 V14.7" fill="none" stroke="#a2a2a2" stroke-width="1.15" stroke-linejoin="round"/></svg>
<span class="t " style="left:78px;top:600px;">Sparks 0(Clone)</span>
<svg style="left:60px;top:616px" width="16" height="16" viewBox="0 0 16 16" ><path d="M8 1.3 L14 4.6 V11.4 L8 14.7 L2 11.4 V4.6 Z M2 4.6 L8 7.9 L14 4.6 M8 7.9 V14.7" fill="none" stroke="#a2a2a2" stroke-width="1.15" stroke-linejoin="round"/></svg>
<span class="t " style="left:78px;top:616px;">Sparks 1(Clone)</span>
<svg style="left:60px;top:632px" width="16" height="16" viewBox="0 0 16 16" ><path d="M8 1.3 L14 4.6 V11.4 L8 14.7 L2 11.4 V4.6 Z M2 4.6 L8 7.9 L14 4.6 M8 7.9 V14.7" fill="none" stroke="#a2a2a2" stroke-width="1.15" stroke-linejoin="round"/></svg>
<span class="t " style="left:78px;top:632px;">Sparks 1(Clone)</span>
<svg style="left:60px;top:648px" width="16" height="16" viewBox="0 0 16 16" ><path d="M8 1.3 L14 4.6 V11.4 L8 14.7 L2 11.4 V4.6 Z M2 4.6 L8 7.9 L14 4.6 M8 7.9 V14.7" fill="none" stroke="#a2a2a2" stroke-width="1.15" stroke-linejoin="round"/></svg>
<span class="t " style="left:78px;top:648px;">Sparks 1(Clone)</span>
<svg style="left:60px;top:664px" width="16" height="16" viewBox="0 0 16 16" ><path d="M8 1.3 L14 4.6 V11.4 L8 14.7 L2 11.4 V4.6 Z M2 4.6 L8 7.9 L14 4.6 M8 7.9 V14.7" fill="none" stroke="#a2a2a2" stroke-width="1.15" stroke-linejoin="round"/></svg>
<span class="t " style="left:78px;top:664px;">Sparks 1(Clone)</span>
</div>
<div class="panel" style="left:1211px;top:741px;width:836px;height:629px;overflow:hidden">
<div class="tabbar"></div>
<div class="tab" style="left:0;width:81px"></div>
<svg style="left:6px;top:1.5px" width="16" height="16" viewBox="0 0 16 16" ><path d="M1.5 3 H6.2 L7.6 4.6 H14.5 V13.5 H1.5 Z" fill="#b0b0b0"/></svg>
<span class="t " style="left:24px;top:3px;">Project</span>
<svg style="left:802px;top:4px" width="10" height="11" viewBox="0 0 10 11" ><path d="M7.4 5.4 V3.1 A2.35 2.35 0 0 0 2.7 3.1 V3.6" fill="none" stroke="#b4b4b4" stroke-width="1.15"/><rect x="0.8" y="5.6" width="7.8" height="4.6" rx="0.8" fill="none" stroke="#b4b4b4" stroke-width="1.25"/></svg>
<svg style="left:822px;top:4px" width="3" height="11" viewBox="0 0 3 11" ><rect x="0.5" y="0" width="2" height="2" fill="#b4b4b4"/><rect x="0.5" y="4.3" width="2" height="2" fill="#b4b4b4"/><rect x="0.5" y="8.6" width="2" height="2" fill="#b4b4b4"/></svg>
<div class="tbar" style="top:19px;height:21px;border-bottom:1px solid #1e1e1e"></div>
<svg style="left:7px;top:23px" width="12" height="12" viewBox="0 0 12 12" ><path d="M6 0 V12 M0 6 H12" stroke="#b4b4b4" stroke-width="1.6"/></svg>
<svg style="left:24px;top:27.5px" width="7" height="4" viewBox="0 0 7 4" ><path d="M0 0 H7 L3.5 4 Z" fill="#a8a8a8"/></svg>
<div class="a" style="left:396px;top:21px;width:318px;height:15.5px;background:#222;border:1px solid #191919;border-radius:3px"></div>
<div class="a" style="left:696.5px;top:22px;width:16.5px;height:13.5px;background:#2a2a2a;border-left:1px solid #1b1b1b;border-radius:0 2px 2px 0"></div>
<svg style="left:402.5px;top:25px" width="8" height="8" viewBox="0 0 8 8" ><circle cx="3" cy="3" r="2.3" fill="none" stroke="#a0a0a0" stroke-width="1.2"/><path d="M4.7 4.7 L7.2 7.2" stroke="#a0a0a0" stroke-width="1.4"/></svg>
<svg style="left:698.5px;top:22px" width="14" height="14" viewBox="0 0 14 14" ><rect x="4.2" y="0.8" width="9" height="9" rx="1" fill="none" stroke="#b4b4b4" stroke-width="1.1"/><rect x="1" y="9" width="4" height="4" fill="#2d2d2d" stroke="#b4b4b4" stroke-width="1.1"/><path d="M5.2 8.8 L10.5 3.5 M7.3 3.4 H10.6 V6.7" fill="none" stroke="#b4b4b4" stroke-width="1.1"/></svg>
<div class="a" style="left:716.7px;top:19px;width:1px;height:20px;background:#232323"></div>
<div class="a" style="left:742.5px;top:19px;width:1px;height:20px;background:#232323"></div>
<div class="a" style="left:768.5999999999999px;top:19px;width:1px;height:20px;background:#232323"></div>
<div class="a" style="left:794.4000000000001px;top:19px;width:1px;height:20px;background:#232323"></div>
<svg style="left:723px;top:22px" width="13" height="14" viewBox="0 0 13 14" ><rect x="1" y="0.5" width="5.6" height="5.6" fill="#a0a0a0"/><circle cx="3.6" cy="10.4" r="3.3" fill="#a0a0a0"/><path d="M9.6 3.4 L12.8 9 H6.4 Z" fill="#a0a0a0"/></svg>
<svg style="left:748.5px;top:24px" width="12" height="11" viewBox="0 0 12 11" ><path d="M0.5 5.6 L5.8 0.5 H10.8 V5.4 L5.4 10.5 Z" fill="#a0a0a0"/><circle cx="8.6" cy="2.7" r="1" fill="#303030"/></svg>
<svg style="left:774.5px;top:23px" width="13" height="12" viewBox="0 0 13 12" ><path d="M6.5 0.3 L8.2 4.3 L12.6 4.6 L9.2 7.4 L10.3 11.7 L6.5 9.4 L2.7 11.7 L3.8 7.4 L0.4 4.6 L4.8 4.3 Z" fill="#7a7a7a"/></svg>
<svg style="left:800px;top:25px" width="15" height="9" viewBox="0 0 15 9" ><path d="M0.5 4.5 Q7.5 -2.5 14.5 4.5 Q7.5 11.5 0.5 4.5 Z" fill="none" stroke="#6e6e6e" stroke-width="1.1"/><circle cx="7.5" cy="4.5" r="2.6" fill="#6e6e6e"/></svg>
<span class="t" style="left:815.5px;top:21.5px;color:#a0a0a0">23</span>
<div class="a" style="left:0;top:40px;width:160px;height:589px;overflow:hidden">
<svg style="left:18px;top:-6px" width="10" height="10" viewBox="0 0 10 10" ><path d="M1 0.5 L9 5 L1 9.5 Z" fill="#5c5c5c"/></svg>
<svg style="left:31px;top:-9px" width="16" height="16" viewBox="0 0 16 16" ><path d="M1.5 3 H6.2 L7.6 4.6 H14.5 V13.5 H1.5 Z" fill="#a8a8a8"/></svg>
<span class="t " style="left:48px;top:-9px;">BOXOPHOBIC</span>
<svg style="left:18px;top:10.5px" width="10" height="10" viewBox="0 0 10 10" ><path d="M0.5 1 H9.5 L5 9 Z" fill="#5c5c5c"/></svg>
<svg style="left:31px;top:7px" width="16" height="16" viewBox="0 0 16 16" ><path d="M2 13 V3.5 H6 L7.4 5.1 H13 V7" fill="none" stroke="#a8a8a8" stroke-width="1.1"/><path d="M4 7 H15.8 L13.6 13.5 H1.6 Z" fill="#a8a8a8"/></svg>
<span class="t " style="left:48px;top:7px;">Devion Games</span>
<svg style="left:32px;top:26.5px" width="10" height="10" viewBox="0 0 10 10" ><path d="M0.5 1 H9.5 L5 9 Z" fill="#5c5c5c"/></svg>
<svg style="left:45px;top:23px" width="16" height="16" viewBox="0 0 16 16" ><path d="M2 13 V3.5 H6 L7.4 5.1 H13 V7" fill="none" stroke="#a8a8a8" stroke-width="1.1"/><path d="M4 7 H15.8 L13.6 13.5 H1.6 Z" fill="#a8a8a8"/></svg>
<span class="t " style="left:62px;top:23px;">Login System</span>
<svg style="left:46px;top:42.5px" width="10" height="10" viewBox="0 0 10 10" ><path d="M0.5 1 H9.5 L5 9 Z" fill="#5c5c5c"/></svg>
<svg style="left:59px;top:39px" width="16" height="16" viewBox="0 0 16 16" ><path d="M2 13 V3.5 H6 L7.4 5.1 H13 V7" fill="none" stroke="#a8a8a8" stroke-width="1.1"/><path d="M4 7 H15.8 L13.6 13.5 H1.6 Z" fill="#a8a8a8"/></svg>
<span class="t " style="left:76px;top:39px;">Example</span>
<svg style="left:73px;top:55px" width="16" height="16" viewBox="0 0 16 16" ><path d="M1.5 3 H6.2 L7.6 4.6 H14.5 V13.5 H1.5 Z" fill="#a8a8a8"/></svg>
<span class="t " style="left:90px;top:55px;">Scenes</span>
<svg style="left:60px;top:74px" width="10" height="10" viewBox="0 0 10 10" ><path d="M1 0.5 L9 5 L1 9.5 Z" fill="#5c5c5c"/></svg>
<svg style="left:73px;top:71px" width="16" height="16" viewBox="0 0 16 16" ><path d="M1.5 3 H6.2 L7.6 4.6 H14.5 V13.5 H1.5 Z" fill="#a8a8a8"/></svg>
<span class="t " style="left:90px;top:71px;">Sci-Fi UI</span>
<svg style="left:32px;top:90px" width="10" height="10" viewBox="0 0 10 10" ><path d="M1 0.5 L9 5 L1 9.5 Z" fill="#5c5c5c"/></svg>
<svg style="left:45px;top:87px" width="16" height="16" viewBox="0 0 16 16" ><path d="M1.5 3 H6.2 L7.6 4.6 H14.5 V13.5 H1.5 Z" fill="#a8a8a8"/></svg>
<span class="t " style="left:62px;top:87px;">Module Manager</span>
<svg style="left:32px;top:106px" width="10" height="10" viewBox="0 0 10 10" ><path d="M1 0.5 L9 5 L1 9.5 Z" fill="#5c5c5c"/></svg>
<svg style="left:45px;top:103px" width="16" height="16" viewBox="0 0 16 16" ><path d="M1.5 3 H6.2 L7.6 4.6 H14.5 V13.5 H1.5 Z" fill="#a8a8a8"/></svg>
<span class="t " style="left:62px;top:103px;">UI Widgets</span>
<svg style="left:32px;top:122px" width="10" height="10" viewBox="0 0 10 10" ><path d="M1 0.5 L9 5 L1 9.5 Z" fill="#5c5c5c"/></svg>
<svg style="left:45px;top:119px" width="16" height="16" viewBox="0 0 16 16" ><path d="M1.5 3 H6.2 L7.6 4.6 H14.5 V13.5 H1.5 Z" fill="#a8a8a8"/></svg>
<span class="t " style="left:62px;top:119px;">Utilities</span>
<svg style="left:31px;top:135px" width="16" height="16" viewBox="0 0 16 16" ><path d="M1.5 3 H6.2 L7.6 4.6 H14.5 V13.5 H1.5 Z" fill="#a8a8a8"/></svg>
<span class="t " style="left:48px;top:135px;">Font</span>
<svg style="left:18px;top:154px" width="10" height="10" viewBox="0 0 10 10" ><path d="M1 0.5 L9 5 L1 9.5 Z" fill="#5c5c5c"/></svg>
<svg style="left:31px;top:151px" width="16" height="16" viewBox="0 0 16 16" ><path d="M1.5 3 H6.2 L7.6 4.6 H14.5 V13.5 H1.5 Z" fill="#a8a8a8"/></svg>
<span class="t " style="left:48px;top:151px;">Free Stylized Skybox</span>
<svg style="left:18px;top:170px" width="10" height="10" viewBox="0 0 10 10" ><path d="M1 0.5 L9 5 L1 9.5 Z" fill="#5c5c5c"/></svg>
<svg style="left:31px;top:167px" width="16" height="16" viewBox="0 0 16 16" ><path d="M1.5 3 H6.2 L7.6 4.6 H14.5 V13.5 H1.5 Z" fill="#a8a8a8"/></svg>
<span class="t " style="left:48px;top:167px;">HYPEPOLY - Battle Royale</span>
<svg style="left:18px;top:186.5px" width="10" height="10" viewBox="0 0 10 10" ><path d="M0.5 1 H9.5 L5 9 Z" fill="#5c5c5c"/></svg>
<svg style="left:31px;top:183px" width="16" height="16" viewBox="0 0 16 16" ><path d="M2 13 V3.5 H6 L7.4 5.1 H13 V7" fill="none" stroke="#a8a8a8" stroke-width="1.1"/><path d="M4 7 H15.8 L13.6 13.5 H1.6 Z" fill="#a8a8a8"/></svg>
<span class="t " style="left:48px;top:183px;">LHS_Alpha2</span>
<svg style="left:45px;top:199px" width="16" height="16" viewBox="0 0 16 16" ><path d="M1.5 3 H6.2 L7.6 4.6 H14.5 V13.5 H1.5 Z" fill="#a8a8a8"/></svg>
<span class="t " style="left:62px;top:199px;">Animations</span>
<svg style="left:45px;top:215px" width="16" height="16" viewBox="0 0 16 16" ><path d="M1.5 3 H6.2 L7.6 4.6 H14.5 V13.5 H1.5 Z" fill="#a8a8a8"/></svg>
<span class="t " style="left:62px;top:215px;">Material</span>
<svg style="left:32px;top:234.5px" width="10" height="10" viewBox="0 0 10 10" ><path d="M0.5 1 H9.5 L5 9 Z" fill="#5c5c5c"/></svg>
<svg style="left:45px;top:231px" width="16" height="16" viewBox="0 0 16 16" ><path d="M2 13 V3.5 H6 L7.4 5.1 H13 V7" fill="none" stroke="#a8a8a8" stroke-width="1.1"/><path d="M4 7 H15.8 L13.6 13.5 H1.6 Z" fill="#a8a8a8"/></svg>
<span class="t " style="left:62px;top:231px;">PartyMonsterRunner</span>
<svg style="left:46px;top:250px" width="10" height="10" viewBox="0 0 10 10" ><path d="M1 0.5 L9 5 L1 9.5 Z" fill="#5c5c5c"/></svg>
<svg style="left:59px;top:247px" width="16" height="16" viewBox="0 0 16 16" ><path d="M1.5 3 H6.2 L7.6 4.6 H14.5 V13.5 H1.5 Z" fill="#a8a8a8"/></svg>
<span class="t " style="left:76px;top:247px;">Animation</span>
<svg style="left:59px;top:263px" width="16" height="16" viewBox="0 0 16 16" ><path d="M1.5 3 H6.2 L7.6 4.6 H14.5 V13.5 H1.5 Z" fill="#a8a8a8"/></svg>
<span class="t " style="left:76px;top:263px;">Animator</span>
<svg style="left:59px;top:279px" width="16" height="16" viewBox="0 0 16 16" ><path d="M1.5 3 H6.2 L7.6 4.6 H14.5 V13.5 H1.5 Z" fill="#a8a8a8"/></svg>
<span class="t " style="left:76px;top:279px;">Material</span>
<svg style="left:59px;top:295px" width="16" height="16" viewBox="0 0 16 16" ><path d="M1.5 3 H6.2 L7.6 4.6 H14.5 V13.5 H1.5 Z" fill="#a8a8a8"/></svg>
<span class="t " style="left:76px;top:295px;">Mesh</span>
<svg style="left:59px;top:311px" width="16" height="16" viewBox="0 0 16 16" ><path d="M1.5 3 H6.2 L7.6 4.6 H14.5 V13.5 H1.5 Z" fill="#a8a8a8"/></svg>
<span class="t " style="left:76px;top:311px;">Prefab</span>
<svg style="left:59px;top:327px" width="16" height="16" viewBox="0 0 16 16" ><path d="M1.5 3 H6.2 L7.6 4.6 H14.5 V13.5 H1.5 Z" fill="#a8a8a8"/></svg>
<span class="t " style="left:76px;top:327px;">Scene</span>
<svg style="left:59px;top:343px" width="16" height="16" viewBox="0 0 16 16" ><path d="M1.5 3 H6.2 L7.6 4.6 H14.5 V13.5 H1.5 Z" fill="#a8a8a8"/></svg>
<span class="t " style="left:76px;top:343px;">Shader</span>
<svg style="left:59px;top:359px" width="16" height="16" viewBox="0 0 16 16" ><path d="M1.5 3 H6.2 L7.6 4.6 H14.5 V13.5 H1.5 Z" fill="#a8a8a8"/></svg>
<span class="t " style="left:76px;top:359px;">SRP</span>
<svg style="left:46px;top:378px" width="10" height="10" viewBox="0 0 10 10" ><path d="M1 0.5 L9 5 L1 9.5 Z" fill="#5c5c5c"/></svg>
<svg style="left:59px;top:375px" width="16" height="16" viewBox="0 0 16 16" ><path d="M1.5 3 H6.2 L7.6 4.6 H14.5 V13.5 H1.5 Z" fill="#a8a8a8"/></svg>
<span class="t " style="left:76px;top:375px;">Texture</span>
<svg style="left:45px;top:391px" width="16" height="16" viewBox="0 0 16 16" ><path d="M1.5 3 H6.2 L7.6 4.6 H14.5 V13.5 H1.5 Z" fill="#a8a8a8"/></svg>
<span class="t " style="left:62px;top:391px;">Prefabs</span>
<svg style="left:45px;top:407px" width="16" height="16" viewBox="0 0 16 16" ><path d="M1.5 3 H6.2 L7.6 4.6 H14.5 V13.5 H1.5 Z" fill="#a8a8a8"/></svg>
<span class="t " style="left:62px;top:407px;">Scenes</span>
<svg style="left:32px;top:426px" width="10" height="10" viewBox="0 0 10 10" ><path d="M1 0.5 L9 5 L1 9.5 Z" fill="#5c5c5c"/></svg>
<svg style="left:45px;top:423px" width="16" height="16" viewBox="0 0 16 16" ><path d="M1.5 3 H6.2 L7.6 4.6 H14.5 V13.5 H1.5 Z" fill="#a8a8a8"/></svg>
<span class="t " style="left:62px;top:423px;">Scripts</span>
<svg style="left:45px;top:439px" width="16" height="16" viewBox="0 0 16 16" ><path d="M1.5 3 H6.2 L7.6 4.6 H14.5 V13.5 H1.5 Z" fill="#a8a8a8"/></svg>
<span class="t " style="left:62px;top:439px;">sound</span>
<svg style="left:45px;top:455px" width="16" height="16" viewBox="0 0 16 16" ><path d="M1.5 3 H6.2 L7.6 4.6 H14.5 V13.5 H1.5 Z" fill="#a8a8a8"/></svg>
<span class="t " style="left:62px;top:455px;">UI</span>
<svg style="left:18px;top:474.5px" width="10" height="10" viewBox="0 0 10 10" ><path d="M0.5 1 H9.5 L5 9 Z" fill="#5c5c5c"/></svg>
<svg style="left:31px;top:471px" width="16" height="16" viewBox="0 0 16 16" ><path d="M2 13 V3.5 H6 L7.4 5.1 H13 V7" fill="none" stroke="#a8a8a8" stroke-width="1.1"/><path d="M4 7 H15.8 L13.6 13.5 H1.6 Z" fill="#a8a8a8"/></svg>
<span class="t " style="left:48px;top:471px;">LSJ</span>
<div class="a" style="left:0;top:487px;width:160px;height:16px;background:#3e3e3e"></div>
<svg style="left:32px;top:490px" width="10" height="10" viewBox="0 0 10 10" ><path d="M1 0.5 L9 5 L1 9.5 Z" fill="#5c5c5c"/></svg>
<svg style="left:45px;top:487px" width="16" height="16" viewBox="0 0 16 16" ><path d="M1.5 3 H6.2 L7.6 4.6 H14.5 V13.5 H1.5 Z" fill="#a8a8a8"/></svg>
<span class="t " style="left:62px;top:487px;">Scenes</span>
<svg style="left:31px;top:503px" width="16" height="16" viewBox="0 0 16 16" ><path d="M1.5 3 H6.2 L7.6 4.6 H14.5 V13.5 H1.5 Z" fill="#a8a8a8"/></svg>
<span class="t " style="left:48px;top:503px;">Material</span>
<svg style="left:31px;top:519px" width="16" height="16" viewBox="0 0 16 16" ><path d="M2 3.5 H6 L7.4 5.1 H14 V13 H2 Z" fill="none" stroke="#a8a8a8" stroke-width="1.1"/></svg>
<span class="t " style="left:48px;top:519px;">Plugins</span>
<svg style="left:18px;top:538px" width="10" height="10" viewBox="0 0 10 10" ><path d="M1 0.5 L9 5 L1 9.5 Z" fill="#5c5c5c"/></svg>
<svg style="left:31px;top:535px" width="16" height="16" viewBox="0 0 16 16" ><path d="M1.5 3 H6.2 L7.6 4.6 H14.5 V13.5 H1.5 Z" fill="#a8a8a8"/></svg>
<span class="t " style="left:48px;top:535px;">Prefabs</span>
<svg style="left:31px;top:551px" width="16" height="16" viewBox="0 0 16 16" ><path d="M1.5 3 H6.2 L7.6 4.6 H14.5 V13.5 H1.5 Z" fill="#a8a8a8"/></svg>
<span class="t " style="left:48px;top:551px;">Scenes</span>
<svg style="left:31px;top:567px" width="16" height="16" viewBox="0 0 16 16" ><path d="M1.5 3 H6.2 L7.6 4.6 H14.5 V13.5 H1.5 Z" fill="#a8a8a8"/></svg>
<span class="t " style="left:48px;top:567px;">Scripts</span>
<svg style="left:18px;top:586px" width="10" height="10" viewBox="0 0 10 10" ><path d="M1 0.5 L9 5 L1 9.5 Z" fill="#5c5c5c"/></svg>
<svg style="left:31px;top:583px" width="16" height="16" viewBox="0 0 16 16" ><path d="M1.5 3 H6.2 L7.6 4.6 H14.5 V13.5 H1.5 Z" fill="#a8a8a8"/></svg>
<span class="t " style="left:48px;top:583px;">Sweet Land GUI</span>
</div>
<div class="a" style="left:160px;top:40px;width:13px;height:589px;background:#2a2a2a;border-left:1px solid #272727"></div>
<svg style="left:163px;top:46px" width="8" height="5" viewBox="0 0 8 5" ><path d="M0 5 H8 L4 0 Z" fill="#a0a0a0"/></svg>
<svg style="left:163px;top:617px" width="8" height="5" viewBox="0 0 8 5" ><path d="M0 0 H8 L4 5 Z" fill="#a0a0a0"/></svg>
<div class="a" style="left:162.5px;top:111px;width:9px;height:299px;background:#4a4a4a;border-radius:5px"></div>
<div class="a" style="left:173px;top:40px;width:1.5px;height:589px;background:#1a1a1a"></div>
<div class="a" style="left:174px;top:40px;width:662px;height:589px;background:#292929"></div>
<div class="a" style="left:174px;top:40px;width:662px;height:20px;background:#303030;border-bottom:1px solid #232323"></div>
<span class="t " style="left:178px;top:42px;">Assets</span>
<span class="t " style="left:233px;top:42px;">LSJ</span>
<span class="t " style="left:273px;top:42px;font-weight:bold">Scenes</span>
<svg style="left:222px;top:45.5px" width="7" height="10" viewBox="0 0 7 10" ><path d="M1 1 L6 5 L1 9" fill="none" stroke="#8a8a8a" stroke-width="1.2"/></svg>
<svg style="left:261.5px;top:45.5px" width="7" height="10" viewBox="0 0 7 10" ><path d="M1 1 L6 5 L1 9" fill="none" stroke="#8a8a8a" stroke-width="1.2"/></svg>
<svg style="left:322.5px;top:45.5px" width="7" height="10" viewBox="0 0 7 10" ><path d="M1 1 L6 5 L1 9" fill="none" stroke="#8a8a8a" stroke-width="1.2"/></svg>
<svg style="left:190px;top:61.5px" width="16" height="16" viewBox="0 0 16 16" ><path d="M1.5 3 H6.2 L7.6 4.6 H14.5 V13.5 H1.5 Z" fill="#a8a8a8"/></svg>
<span class="t " style="left:208px;top:62px;">InGame</span>
<svg style="left:190px;top:77.5px" width="16" height="16" viewBox="0 0 16 16" ><path d="M1.5 3 H6.2 L7.6 4.6 H14.5 V13.5 H1.5 Z" fill="#a8a8a8"/></svg>
<span class="t " style="left:208px;top:78px;">InGame_map.v1</span>
<svg style="left:190px;top:93.5px" width="16" height="16" viewBox="0 0 16 16" ><path d="M1.5 3 H6.2 L7.6 4.6 H14.5 V13.5 H1.5 Z" fill="#a8a8a8"/></svg>
<span class="t " style="left:208px;top:94px;">Login</span>
<svg style="left:190px;top:109.5px" width="16" height="16" viewBox="0 0 16 16" ><path d="M1.5 3 H6.2 L7.6 4.6 H14.5 V13.5 H1.5 Z" fill="#a8a8a8"/></svg>
<span class="t " style="left:208px;top:110px;">WaitingUser</span>
<svg style="left:191px;top:126.5px" width="14.5" height="14.5" viewBox="0 0 16 16" ><g fill="#d0d0d0"><path d="M8 0.8 L14.6 4.5 V11.7 L8 15.4 L1.4 11.7 V4.5 Z" /></g><g fill="none" stroke="#2d2d2d" stroke-width="1.5" stroke-linejoin="miter"><path d="M8 0.8 V5.2 M14.6 11.7 L10.8 9.6 M1.4 11.7 L5.2 9.6"/></g><g fill="#2d2d2d"><path d="M8 5.2 L10.9 6.8 L8 8.4 L5.1 6.8 Z"/><path d="M4.3 8.0 L7.2 9.7 V12.9 L4.3 11.3 Z"/><path d="M11.7 8.0 L8.8 9.7 V12.9 L11.7 11.3 Z"/></g></svg>
<span class="t " style="left:208px;top:126px;">InGame</span>
<svg style="left:191px;top:142.5px" width="14.5" height="14.5" viewBox="0 0 16 16" ><g fill="#d0d0d0"><path d="M8 0.8 L14.6 4.5 V11.7 L8 15.4 L1.4 11.7 V4.5 Z" /></g><g fill="none" stroke="#2d2d2d" stroke-width="1.5" stroke-linejoin="miter"><path d="M8 0.8 V5.2 M14.6 11.7 L10.8 9.6 M1.4 11.7 L5.2 9.6"/></g><g fill="#2d2d2d"><path d="M8 5.2 L10.9 6.8 L8 8.4 L5.1 6.8 Z"/><path d="M4.3 8.0 L7.2 9.7 V12.9 L4.3 11.3 Z"/><path d="M11.7 8.0 L8.8 9.7 V12.9 L11.7 11.3 Z"/></g></svg>
<span class="t " style="left:208px;top:142px;">InGame_map.v1</span>
<div class="a" style="left:174px;top:158px;width:662px;height:16px;background:#3e3e3e"></div>
<svg style="left:191px;top:158.5px" width="14.5" height="14.5" viewBox="0 0 16 16" ><g fill="#d0d0d0"><path d="M8 0.8 L14.6 4.5 V11.7 L8 15.4 L1.4 11.7 V4.5 Z" /></g><g fill="none" stroke="#2d2d2d" stroke-width="1.5" stroke-linejoin="miter"><path d="M8 0.8 V5.2 M14.6 11.7 L10.8 9.6 M1.4 11.7 L5.2 9.6"/></g><g fill="#2d2d2d"><path d="M8 5.2 L10.9 6.8 L8 8.4 L5.1 6.8 Z"/><path d="M4.3 8.0 L7.2 9.7 V12.9 L4.3 11.3 Z"/><path d="M11.7 8.0 L8.8 9.7 V12.9 L11.7 11.3 Z"/></g></svg>
<span class="t " style="left:208px;top:158px;">Intro</span>
<svg style="left:191px;top:174.5px" width="14.5" height="14.5" viewBox="0 0 16 16" ><g fill="#d0d0d0"><path d="M8 0.8 L14.6 4.5 V11.7 L8 15.4 L1.4 11.7 V4.5 Z" /></g><g fill="none" stroke="#2d2d2d" stroke-width="1.5" stroke-linejoin="miter"><path d="M8 0.8 V5.2 M14.6 11.7 L10.8 9.6 M1.4 11.7 L5.2 9.6"/></g><g fill="#2d2d2d"><path d="M8 5.2 L10.9 6.8 L8 8.4 L5.1 6.8 Z"/><path d="M4.3 8.0 L7.2 9.7 V12.9 L4.3 11.3 Z"/><path d="M11.7 8.0 L8.8 9.7 V12.9 L11.7 11.3 Z"/></g></svg>
<span class="t " style="left:208px;top:174px;">Login</span>
<svg style="left:190px;top:190px" width="16" height="16" viewBox="0 0 16 16" ><circle cx="5.5" cy="5" r="4.6" fill="#d69a10"/><rect x="3.6" y="9.8" width="3.8" height="1.3" fill="#9a9a9a"/><rect x="4" y="11.6" width="3" height="1.2" fill="#9a9a9a"/><circle cx="11.5" cy="11.5" r="2.1" fill="none" stroke="#b0b0b0" stroke-width="1.3"/><path d="M11.5 8 V15 M8 11.5 H15 M9 9 L14 14 M14 9 L9 14" stroke="#b0b0b0" stroke-width="0.9"/><circle cx="11.5" cy="11.5" r="1.2" fill="#2d2d2d"/></svg>
<span class="t " style="left:208px;top:190px;">New Lighting Settings 1</span>
<svg style="left:190px;top:206px" width="16" height="16" viewBox="0 0 16 16" ><circle cx="5.5" cy="5" r="4.6" fill="#d69a10"/><rect x="3.6" y="9.8" width="3.8" height="1.3" fill="#9a9a9a"/><rect x="4" y="11.6" width="3" height="1.2" fill="#9a9a9a"/><circle cx="11.5" cy="11.5" r="2.1" fill="none" stroke="#b0b0b0" stroke-width="1.3"/><path d="M11.5 8 V15 M8 11.5 H15 M9 9 L14 14 M14 9 L9 14" stroke="#b0b0b0" stroke-width="0.9"/><circle cx="11.5" cy="11.5" r="1.2" fill="#2d2d2d"/></svg>
<span class="t " style="left:208px;top:206px;">New Lighting Settings 2</span>
<svg style="left:190px;top:222px" width="16" height="16" viewBox="0 0 16 16" ><circle cx="5.5" cy="5" r="4.6" fill="#d69a10"/><rect x="3.6" y="9.8" width="3.8" height="1.3" fill="#9a9a9a"/><rect x="4" y="11.6" width="3" height="1.2" fill="#9a9a9a"/><circle cx="11.5" cy="11.5" r="2.1" fill="none" stroke="#b0b0b0" stroke-width="1.3"/><path d="M11.5 8 V15 M8 11.5 H15 M9 9 L14 14 M14 9 L9 14" stroke="#b0b0b0" stroke-width="0.9"/><circle cx="11.5" cy="11.5" r="1.2" fill="#2d2d2d"/></svg>
<span class="t " style="left:208px;top:222px;">New Lighting Settings 3</span>
<svg style="left:190px;top:238px" width="16" height="16" viewBox="0 0 16 16" ><circle cx="5.5" cy="5" r="4.6" fill="#d69a10"/><rect x="3.6" y="9.8" width="3.8" height="1.3" fill="#9a9a9a"/><rect x="4" y="11.6" width="3" height="1.2" fill="#9a9a9a"/><circle cx="11.5" cy="11.5" r="2.1" fill="none" stroke="#b0b0b0" stroke-width="1.3"/><path d="M11.5 8 V15 M8 11.5 H15 M9 9 L14 14 M14 9 L9 14" stroke="#b0b0b0" stroke-width="0.9"/><circle cx="11.5" cy="11.5" r="1.2" fill="#2d2d2d"/></svg>
<span class="t " style="left:208px;top:238px;">New Lighting Settings 4</span>
<svg style="left:190px;top:254px" width="16" height="16" viewBox="0 0 16 16" ><circle cx="5.5" cy="5" r="4.6" fill="#d69a10"/><rect x="3.6" y="9.8" width="3.8" height="1.3" fill="#9a9a9a"/><rect x="4" y="11.6" width="3" height="1.2" fill="#9a9a9a"/><circle cx="11.5" cy="11.5" r="2.1" fill="none" stroke="#b0b0b0" stroke-width="1.3"/><path d="M11.5 8 V15 M8 11.5 H15 M9 9 L14 14 M14 9 L9 14" stroke="#b0b0b0" stroke-width="0.9"/><circle cx="11.5" cy="11.5" r="1.2" fill="#2d2d2d"/></svg>
<span class="t " style="left:208px;top:254px;">New Lighting Settings</span>
<svg style="left:191px;top:270.5px" width="14.5" height="14.5" viewBox="0 0 16 16" ><g fill="#d0d0d0"><path d="M8 0.8 L14.6 4.5 V11.7 L8 15.4 L1.4 11.7 V4.5 Z" /></g><g fill="none" stroke="#2d2d2d" stroke-width="1.5" stroke-linejoin="miter"><path d="M8 0.8 V5.2 M14.6 11.7 L10.8 9.6 M1.4 11.7 L5.2 9.6"/></g><g fill="#2d2d2d"><path d="M8 5.2 L10.9 6.8 L8 8.4 L5.1 6.8 Z"/><path d="M4.3 8.0 L7.2 9.7 V12.9 L4.3 11.3 Z"/><path d="M11.7 8.0 L8.8 9.7 V12.9 L11.7 11.3 Z"/></g></svg>
<span class="t " style="left:208px;top:270px;">WaitingUser</span>
<div class="a" style="left:174px;top:609px;width:662px;height:20px;background:#333;border-top:1px solid #232323"></div>
<svg style="left:178px;top:612px" width="14" height="14" viewBox="0 0 16 16" ><g fill="#d0d0d0"><path d="M8 0.8 L14.6 4.5 V11.7 L8 15.4 L1.4 11.7 V4.5 Z" /></g><g fill="none" stroke="#2d2d2d" stroke-width="1.5" stroke-linejoin="miter"><path d="M8 0.8 V5.2 M14.6 11.7 L10.8 9.6 M1.4 11.7 L5.2 9.6"/></g><g fill="#2d2d2d"><path d="M8 5.2 L10.9 6.8 L8 8.4 L5.1 6.8 Z"/><path d="M4.3 8.0 L7.2 9.7 V12.9 L4.3 11.3 Z"/><path d="M11.7 8.0 L8.8 9.7 V12.9 L11.7 11.3 Z"/></g></svg>
<span class="t " style="left:194px;top:611px;">Assets/LSJ/Scenes/Intro.unity</span>
<div class="a" style="left:770px;top:618.3px;width:50px;height:1.4px;background:#5a5a5a"></div>
<div class="a" style="left:765px;top:614px;width:10px;height:10px;border-radius:5px;background:#999"></div>
</div>
<div class="panel" style="left:2049px;top:73px;width:37px;height:1297px;overflow:hidden;background:#2d2d2d">
<div class="a" style="left:0;top:0;width:37px;height:73px;background:#303030;border-radius:3px 0 0 0"></div>
<div class="a" style="left:0;top:73px;width:37px;height:1px;background:#1c1c1c"></div>
<svg style="left:8.5px;top:4.5px" width="11" height="11" viewBox="0 0 11 11" ><circle cx="5.5" cy="5.5" r="5.4" fill="#a8a8a8"/><rect x="4.6" y="4.5" width="1.9" height="4.3" fill="#303030"/><rect x="4.6" y="2" width="1.9" height="1.7" fill="#303030"/></svg>
<span class="t" style="left:24px;top:2.5px;">Inspector</span>
<svg style="left:9.5px;top:27px" width="25" height="28" viewBox="0 0 25 28" ><path d="M12.5 0.5 L24.4 7.2 V20.8 L12.5 27.5 L0.6 20.8 V7.2 Z" fill="#c4c4c4"/><path d="M12.5 14 L24.4 7.2 V20.8 L12.5 27.5 Z" fill="#b0b0b0"/><path d="M12.5 14 L0.6 7.2 V20.8 L12.5 27.5 Z" fill="#d2d2d2"/><path d="M12.5 0.5 V6.5 M0.6 20.8 L5.8 17.8 M24.4 20.8 L19.2 17.8" stroke="#303030" stroke-width="1.6"/><path d="M12.5 6.4 L17.8 9.4 L12.5 12.4 L7.2 9.4 Z" fill="#303030"/><path d="M5 12.2 L10.4 15.3 V21.5 L5 18.4 Z" fill="#303030"/><path d="M20 12.2 L14.6 15.3 V21.5 L20 18.4 Z" fill="#303030"/></svg>
<div class="a" style="left:0;top:1226.5px;width:37px;height:21px;background:#2f2f2f;border-top:1px solid #1f1f1f;border-bottom:1px solid #1f1f1f"></div>
<span class="t" style="left:7.5px;top:1229.5px;font-weight:bold;color:#b4b4b4;letter-spacing:.3px">AssetLabels</span>
<span class="t" style="left:4.5px;top:1277px;">AssetBundle</span>
</div>
</body></html>
